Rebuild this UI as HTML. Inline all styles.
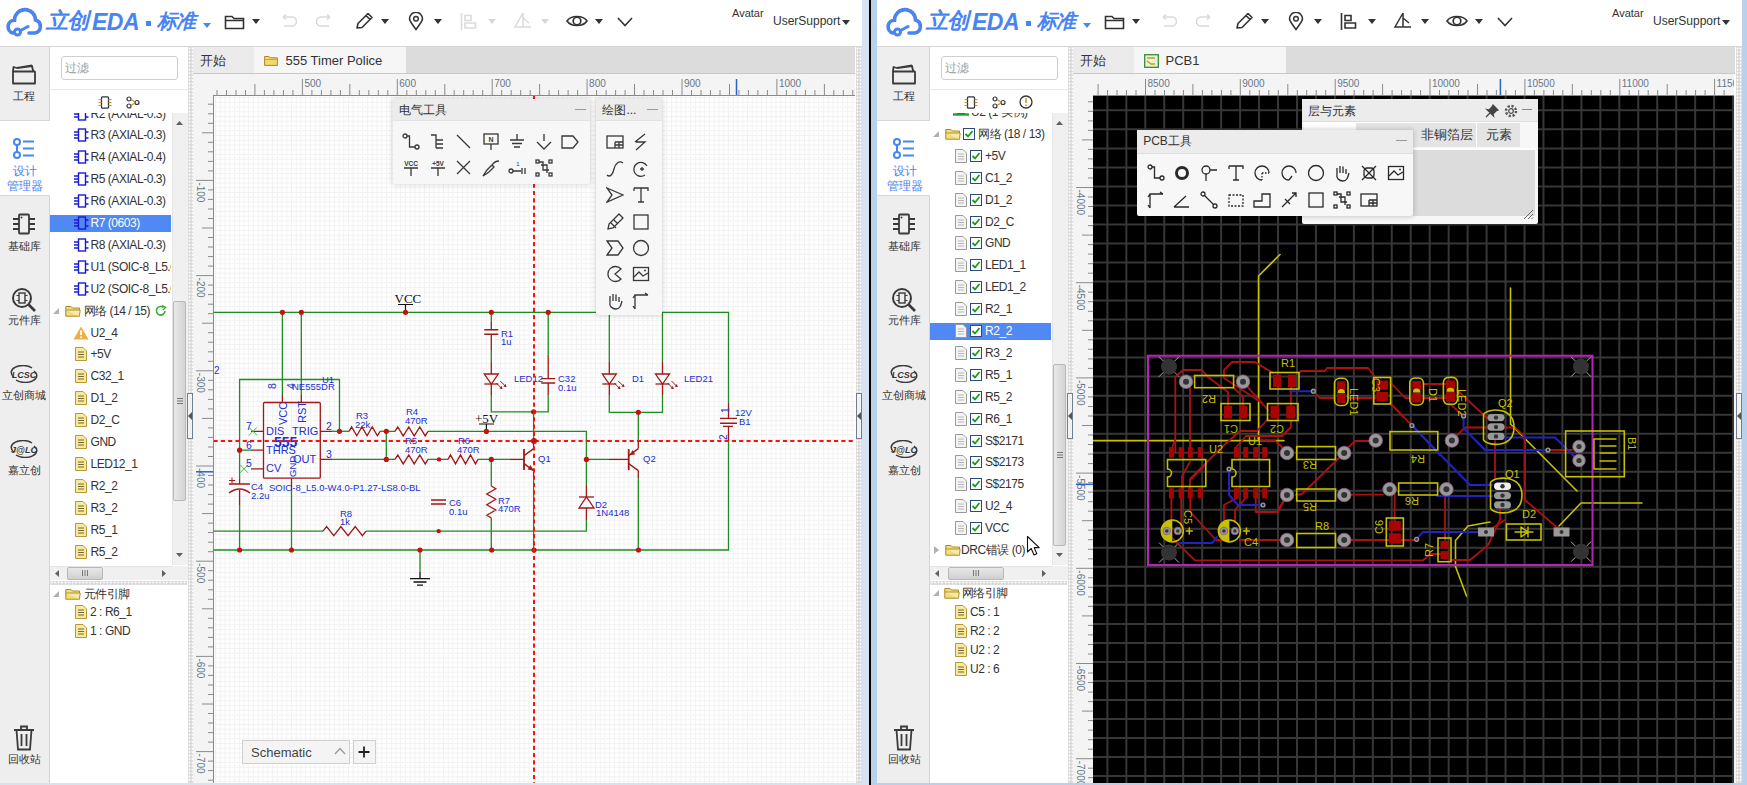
<!DOCTYPE html>
<html><head><meta charset="utf-8"><style>
html,body{margin:0;padding:0;}
body{width:1747px;height:785px;overflow:hidden;position:relative;font-family:"Liberation Sans", sans-serif;background:#fff;}
svg text{font-family:"Liberation Sans", sans-serif;}
</style></head><body>
<div style="position:absolute;left:0px;top:0px;width:1747px;height:785px;background:#b9d1ea"></div><div style="position:absolute;left:0px;top:0px;width:869px;height:785px;background:#d6e4f2"></div><div style="position:absolute;left:869px;top:0px;width:2px;height:785px;background:#000"></div><div style="position:absolute;left:-3px;top:0px;width:865px;height:783px;background:#fff;overflow:hidden"></div><div style="position:absolute;left:-3px;top:0px;width:865px;height:47px;background:#fff;border-bottom:1px solid #d6d6d6;box-sizing:border-box"></div><svg style="position:absolute;left:5px;top:7px;" width="40" height="32" viewBox="0 0 40 32"><path d="M8 26 A6.5 6.5 0 0 1 9.5 13.2 A10.5 10.5 0 0 1 30.5 13 A6.7 6.7 0 0 1 30 26 H24" fill="none" stroke="#4a84f2" stroke-width="3.6" stroke-linecap="round"/><circle cx="12.5" cy="25" r="3" fill="none" stroke="#4a84f2" stroke-width="3"/><path d="M15.5 23.5 L23 19.5" stroke="#4a84f2" stroke-width="3" stroke-linecap="round"/></svg><div style="position:absolute;left:46px;top:10px;font-size:22px;line-height:22px;color:#4a84f2;white-space:nowrap;font-weight:bold;font-style:italic;letter-spacing:-1px">立创</div><div style="position:absolute;left:92px;top:11px;font-size:23px;line-height:23px;color:#4a84f2;white-space:nowrap;font-weight:bold;font-style:italic;letter-spacing:-0.5px">EDA</div><div style="position:absolute;left:146px;top:21px;width:5px;height:5px;background:#4a84f2"></div><div style="position:absolute;left:157px;top:11px;font-size:20px;line-height:20px;color:#4a84f2;white-space:nowrap;font-weight:bold;font-style:italic;letter-spacing:-1.5px">标准</div><svg style="position:absolute;left:203px;top:23px;" width="8" height="5" viewBox="0 0 8 5"><path d="M0 0 L8 0 L4 5 Z" fill="#4a84f2"/></svg><svg style="position:absolute;left:224px;top:13px;" width="22" height="17" viewBox="0 0 22 17"><path d="M1.5 3.5 H8 L10 5.5 H19.5 V15.5 H1.5 Z M1.5 7.5 H19.5" fill="none" stroke="#333" stroke-width="1.6"/></svg><svg style="position:absolute;left:252px;top:19px;" width="8" height="5" viewBox="0 0 8 5"><path d="M0 0 L8 0 L4 5 Z" fill="#333"/></svg><svg style="position:absolute;left:279px;top:14px;" width="18" height="14" viewBox="0 0 18 14"><path d="M4 3 H13 A4.5 4.5 0 0 1 13 12 H5 M4 3 L7 0.5 M4 3 L7 5.5" fill="none" stroke="#dadada" stroke-width="1.6"/></svg><svg style="position:absolute;left:316px;top:14px;" width="18" height="14" viewBox="0 0 18 14"><path d="M14 3 H5 A4.5 4.5 0 0 0 5 12 H13 M14 3 L11 0.5 M14 3 L11 5.5" fill="none" stroke="#dadada" stroke-width="1.6"/></svg><svg style="position:absolute;left:354px;top:12px;" width="20" height="19" viewBox="0 0 20 19"><path d="M3 16 L4 11.5 L14 1.5 L18 5.5 L8 15.5 Z M12 3.5 L16 7.5" fill="none" stroke="#333" stroke-width="1.6" stroke-linejoin="round"/></svg><svg style="position:absolute;left:381px;top:19px;" width="8" height="5" viewBox="0 0 8 5"><path d="M0 0 L8 0 L4 5 Z" fill="#333"/></svg><svg style="position:absolute;left:408px;top:12px;" width="16" height="19" viewBox="0 0 16 19"><path d="M8 17.5 C3 11 1.5 9 1.5 6.8 A6.5 6.5 0 0 1 14.5 6.8 C14.5 9 13 11 8 17.5 Z" fill="none" stroke="#333" stroke-width="1.6"/><circle cx="8" cy="6.8" r="2.3" fill="none" stroke="#333" stroke-width="1.5"/></svg><svg style="position:absolute;left:434px;top:19px;" width="8" height="5" viewBox="0 0 8 5"><path d="M0 0 L8 0 L4 5 Z" fill="#333"/></svg><svg style="position:absolute;left:460px;top:13px;" width="18" height="18" viewBox="0 0 18 18"><path d="M1.5 0 V17 M5 2.5 H11 V7.5 H5 Z M5 10 H15.5 V15 H5 Z" fill="none" stroke="#dadada" stroke-width="1.6"/></svg><svg style="position:absolute;left:488px;top:19px;" width="8" height="5" viewBox="0 0 8 5"><path d="M0 0 L8 0 L4 5 Z" fill="#d8d8d8"/></svg><svg style="position:absolute;left:513px;top:12px;" width="20" height="18" viewBox="0 0 20 18"><path d="M10 1 L10 15 M10 1 L2 15 H18 M10 6 L16 11" fill="none" stroke="#dadada" stroke-width="1.5"/></svg><svg style="position:absolute;left:541px;top:19px;" width="8" height="5" viewBox="0 0 8 5"><path d="M0 0 L8 0 L4 5 Z" fill="#d8d8d8"/></svg><svg style="position:absolute;left:566px;top:14px;" width="22" height="14" viewBox="0 0 22 14"><path d="M1 7 C5 1 17 1 21 7 C17 13 5 13 1 7 Z" fill="none" stroke="#333" stroke-width="1.6"/><circle cx="11" cy="7" r="3.8" fill="none" stroke="#333" stroke-width="1.7"/></svg><svg style="position:absolute;left:595px;top:19px;" width="8" height="5" viewBox="0 0 8 5"><path d="M0 0 L8 0 L4 5 Z" fill="#333"/></svg><svg style="position:absolute;left:617px;top:17px;" width="16" height="10" viewBox="0 0 16 10"><path d="M1 1 L8 8.5 L15 1" fill="none" stroke="#333" stroke-width="1.6"/></svg><div style="position:absolute;left:732px;top:8px;font-size:11px;line-height:11px;color:#333;white-space:nowrap;">Avatar</div><div style="position:absolute;left:773px;top:15px;font-size:12px;line-height:12px;color:#333;white-space:nowrap;">UserSupport</div><svg style="position:absolute;left:842px;top:20px;" width="8" height="5" viewBox="0 0 8 5"><path d="M0 0 L8 0 L4 5 Z" fill="#333"/></svg><div style="position:absolute;left:-3px;top:47px;width:53px;height:736px;background:#eeeeee;border-right:1px solid #d4d4d4;box-sizing:border-box"></div><div style="position:absolute;left:-3px;top:120px;width:53px;height:1px;background:#d8d8d8"></div><div style="position:absolute;left:-3px;top:121px;width:53px;height:74px;background:#ffffff"></div><div style="position:absolute;left:-3px;top:195px;width:53px;height:1px;background:#d8d8d8"></div><svg style="position:absolute;left:11px;top:63px;" width="26" height="23" viewBox="0 0 26 23"><path d="M2 8 V20.5 H24 V9 L22 7.5 L21 3 L6 5 L2.5 4 Z M2 8.5 H24 M6 5 L21 2.5" fill="none" stroke="#3a3a3a" stroke-width="1.8" stroke-linejoin="round"/></svg><div style="position:absolute;left:13px;top:91px;font-size:11px;line-height:11px;color:#333;white-space:nowrap;">工程</div><svg style="position:absolute;left:12px;top:138px;" width="24" height="21" viewBox="0 0 24 21"><circle cx="5" cy="4" r="3" fill="none" stroke="#4a84f2" stroke-width="2"/><circle cx="5" cy="17" r="3" fill="none" stroke="#4a84f2" stroke-width="2"/><path d="M5 7 V14 M11 3.5 H22 M11 10.5 H22 M11 17.5 H22" stroke="#4a84f2" stroke-width="2"/></svg><div style="position:absolute;left:13px;top:166px;font-size:11.5px;line-height:11.5px;color:#4a84f2;white-space:nowrap;">设计</div><div style="position:absolute;left:7px;top:181px;font-size:11.5px;line-height:11.5px;color:#4a84f2;white-space:nowrap;">管理器</div><svg style="position:absolute;left:12px;top:213px;" width="24" height="22" viewBox="0 0 24 22"><rect x="7" y="1.5" width="10" height="19" rx="1" fill="none" stroke="#3a3a3a" stroke-width="1.8"/><path d="M1 6 H7 M1 11 H7 M1 16 H7 M17 6 H23 M17 11 H23 M17 16 H23" stroke="#3a3a3a" stroke-width="1.8"/><circle cx="9.5" cy="4.5" r="1" fill="#3a3a3a"/></svg><div style="position:absolute;left:7.5px;top:241px;font-size:11px;line-height:11px;color:#333;white-space:nowrap;">基础库</div><svg style="position:absolute;left:11px;top:287px;" width="26" height="25" viewBox="0 0 26 25"><circle cx="11" cy="11" r="9" fill="none" stroke="#3a3a3a" stroke-width="2"/><path d="M17.5 17.5 L24 24" stroke="#3a3a3a" stroke-width="2.6"/><rect x="8" y="6" width="6" height="10" fill="none" stroke="#3a3a3a" stroke-width="1.4"/><path d="M5.5 8.5 H8 M5.5 13.5 H8 M14 8.5 H16.5 M14 13.5 H16.5" stroke="#3a3a3a" stroke-width="1.2"/></svg><div style="position:absolute;left:7.5px;top:315px;font-size:11px;line-height:11px;color:#333;white-space:nowrap;">元件库</div><svg style="position:absolute;left:10px;top:365px;" width="28" height="18" viewBox="0 0 28 18"><path d="M4 12 A11 6.5 0 0 1 22 3" fill="none" stroke="#3a3a3a" stroke-width="1.5"/><path d="M24 6 A11 6.5 0 0 1 6 15" fill="none" stroke="#3a3a3a" stroke-width="1.5"/><text x="14" y="12.5" font-size="9" font-weight="bold" font-style="italic" text-anchor="middle" fill="#3a3a3a">LCSC</text></svg><div style="position:absolute;left:2px;top:390px;font-size:11px;line-height:11px;color:#333;white-space:nowrap;">立创商城</div><svg style="position:absolute;left:10px;top:440px;" width="28" height="18" viewBox="0 0 28 18"><path d="M4 12 A11 6.5 0 0 1 22 3" fill="none" stroke="#3a3a3a" stroke-width="1.5"/><path d="M24 6 A11 6.5 0 0 1 6 15" fill="none" stroke="#3a3a3a" stroke-width="1.5"/><text x="14" y="12.5" font-size="9" font-weight="bold" font-style="italic" text-anchor="middle" fill="#3a3a3a">J@LC</text></svg><div style="position:absolute;left:7.5px;top:465px;font-size:11px;line-height:11px;color:#333;white-space:nowrap;">嘉立创</div><svg style="position:absolute;left:12px;top:725px;" width="24" height="26" viewBox="0 0 24 26"><path d="M2 5 H22 M9 5 V1.5 H15 V5 M4.5 5 L6 24.5 H18 L19.5 5 M9.5 9 V21 M14.5 9 V21" fill="none" stroke="#3a3a3a" stroke-width="1.8"/></svg><div style="position:absolute;left:7.5px;top:754px;font-size:11px;line-height:11px;color:#333;white-space:nowrap;">回收站</div><div style="position:absolute;left:50px;top:47px;width:137px;height:736px;background:#fff"></div><div style="position:absolute;left:60.5px;top:56px;width:117px;height:24px;border:1px solid #cfcfcf;border-radius:3px;box-sizing:border-box;background:#fff"></div><div style="position:absolute;left:65px;top:62px;font-size:12px;line-height:12px;color:#9a9a9a;white-space:nowrap;">过滤</div><div style="position:absolute;left:50px;top:89px;width:137px;height:1px;background:#e6e6e6"></div><div style="position:absolute;left:187px;top:47px;width:6px;height:736px;background-color:#dadada;background-image:radial-gradient(circle at 1.5px 1.5px,#ffffff 0.9px,transparent 1.1px);background-size:3px 3.5px;border-left:1px solid #fff;box-sizing:border-box"></div><div style="position:absolute;left:855px;top:47px;width:7px;height:736px;background-color:#dadada;background-image:radial-gradient(circle at 1.5px 1.5px,#ffffff 0.9px,transparent 1.1px);background-size:3px 3.5px;border-left:1px solid #fff;box-sizing:border-box"></div><div style="position:absolute;left:877px;top:0px;width:865px;height:783px;background:#fff;overflow:hidden"></div><div style="position:absolute;left:877px;top:0px;width:865px;height:47px;background:#fff;border-bottom:1px solid #d6d6d6;box-sizing:border-box"></div><svg style="position:absolute;left:885px;top:7px;" width="40" height="32" viewBox="0 0 40 32"><path d="M8 26 A6.5 6.5 0 0 1 9.5 13.2 A10.5 10.5 0 0 1 30.5 13 A6.7 6.7 0 0 1 30 26 H24" fill="none" stroke="#4a84f2" stroke-width="3.6" stroke-linecap="round"/><circle cx="12.5" cy="25" r="3" fill="none" stroke="#4a84f2" stroke-width="3"/><path d="M15.5 23.5 L23 19.5" stroke="#4a84f2" stroke-width="3" stroke-linecap="round"/></svg><div style="position:absolute;left:926px;top:10px;font-size:22px;line-height:22px;color:#4a84f2;white-space:nowrap;font-weight:bold;font-style:italic;letter-spacing:-1px">立创</div><div style="position:absolute;left:972px;top:11px;font-size:23px;line-height:23px;color:#4a84f2;white-space:nowrap;font-weight:bold;font-style:italic;letter-spacing:-0.5px">EDA</div><div style="position:absolute;left:1026px;top:21px;width:5px;height:5px;background:#4a84f2"></div><div style="position:absolute;left:1037px;top:11px;font-size:20px;line-height:20px;color:#4a84f2;white-space:nowrap;font-weight:bold;font-style:italic;letter-spacing:-1.5px">标准</div><svg style="position:absolute;left:1083px;top:23px;" width="8" height="5" viewBox="0 0 8 5"><path d="M0 0 L8 0 L4 5 Z" fill="#4a84f2"/></svg><svg style="position:absolute;left:1104px;top:13px;" width="22" height="17" viewBox="0 0 22 17"><path d="M1.5 3.5 H8 L10 5.5 H19.5 V15.5 H1.5 Z M1.5 7.5 H19.5" fill="none" stroke="#333" stroke-width="1.6"/></svg><svg style="position:absolute;left:1132px;top:19px;" width="8" height="5" viewBox="0 0 8 5"><path d="M0 0 L8 0 L4 5 Z" fill="#333"/></svg><svg style="position:absolute;left:1159px;top:14px;" width="18" height="14" viewBox="0 0 18 14"><path d="M4 3 H13 A4.5 4.5 0 0 1 13 12 H5 M4 3 L7 0.5 M4 3 L7 5.5" fill="none" stroke="#dadada" stroke-width="1.6"/></svg><svg style="position:absolute;left:1196px;top:14px;" width="18" height="14" viewBox="0 0 18 14"><path d="M14 3 H5 A4.5 4.5 0 0 0 5 12 H13 M14 3 L11 0.5 M14 3 L11 5.5" fill="none" stroke="#dadada" stroke-width="1.6"/></svg><svg style="position:absolute;left:1234px;top:12px;" width="20" height="19" viewBox="0 0 20 19"><path d="M3 16 L4 11.5 L14 1.5 L18 5.5 L8 15.5 Z M12 3.5 L16 7.5" fill="none" stroke="#333" stroke-width="1.6" stroke-linejoin="round"/></svg><svg style="position:absolute;left:1261px;top:19px;" width="8" height="5" viewBox="0 0 8 5"><path d="M0 0 L8 0 L4 5 Z" fill="#333"/></svg><svg style="position:absolute;left:1288px;top:12px;" width="16" height="19" viewBox="0 0 16 19"><path d="M8 17.5 C3 11 1.5 9 1.5 6.8 A6.5 6.5 0 0 1 14.5 6.8 C14.5 9 13 11 8 17.5 Z" fill="none" stroke="#333" stroke-width="1.6"/><circle cx="8" cy="6.8" r="2.3" fill="none" stroke="#333" stroke-width="1.5"/></svg><svg style="position:absolute;left:1314px;top:19px;" width="8" height="5" viewBox="0 0 8 5"><path d="M0 0 L8 0 L4 5 Z" fill="#333"/></svg><svg style="position:absolute;left:1340px;top:13px;" width="18" height="18" viewBox="0 0 18 18"><path d="M1.5 0 V17 M5 2.5 H11 V7.5 H5 Z M5 10 H15.5 V15 H5 Z" fill="none" stroke="#333" stroke-width="1.6"/></svg><svg style="position:absolute;left:1368px;top:19px;" width="8" height="5" viewBox="0 0 8 5"><path d="M0 0 L8 0 L4 5 Z" fill="#333"/></svg><svg style="position:absolute;left:1393px;top:12px;" width="20" height="18" viewBox="0 0 20 18"><path d="M10 1 L10 15 M10 1 L2 15 H18 M10 6 L16 11" fill="none" stroke="#333" stroke-width="1.5"/></svg><svg style="position:absolute;left:1421px;top:19px;" width="8" height="5" viewBox="0 0 8 5"><path d="M0 0 L8 0 L4 5 Z" fill="#333"/></svg><svg style="position:absolute;left:1446px;top:14px;" width="22" height="14" viewBox="0 0 22 14"><path d="M1 7 C5 1 17 1 21 7 C17 13 5 13 1 7 Z" fill="none" stroke="#333" stroke-width="1.6"/><circle cx="11" cy="7" r="3.8" fill="none" stroke="#333" stroke-width="1.7"/></svg><svg style="position:absolute;left:1475px;top:19px;" width="8" height="5" viewBox="0 0 8 5"><path d="M0 0 L8 0 L4 5 Z" fill="#333"/></svg><svg style="position:absolute;left:1497px;top:17px;" width="16" height="10" viewBox="0 0 16 10"><path d="M1 1 L8 8.5 L15 1" fill="none" stroke="#333" stroke-width="1.6"/></svg><div style="position:absolute;left:1612px;top:8px;font-size:11px;line-height:11px;color:#333;white-space:nowrap;">Avatar</div><div style="position:absolute;left:1653px;top:15px;font-size:12px;line-height:12px;color:#333;white-space:nowrap;">UserSupport</div><svg style="position:absolute;left:1722px;top:20px;" width="8" height="5" viewBox="0 0 8 5"><path d="M0 0 L8 0 L4 5 Z" fill="#333"/></svg><div style="position:absolute;left:877px;top:47px;width:53px;height:736px;background:#eeeeee;border-right:1px solid #d4d4d4;box-sizing:border-box"></div><div style="position:absolute;left:877px;top:120px;width:53px;height:1px;background:#d8d8d8"></div><div style="position:absolute;left:877px;top:121px;width:53px;height:74px;background:#ffffff"></div><div style="position:absolute;left:877px;top:195px;width:53px;height:1px;background:#d8d8d8"></div><svg style="position:absolute;left:891px;top:63px;" width="26" height="23" viewBox="0 0 26 23"><path d="M2 8 V20.5 H24 V9 L22 7.5 L21 3 L6 5 L2.5 4 Z M2 8.5 H24 M6 5 L21 2.5" fill="none" stroke="#3a3a3a" stroke-width="1.8" stroke-linejoin="round"/></svg><div style="position:absolute;left:893px;top:91px;font-size:11px;line-height:11px;color:#333;white-space:nowrap;">工程</div><svg style="position:absolute;left:892px;top:138px;" width="24" height="21" viewBox="0 0 24 21"><circle cx="5" cy="4" r="3" fill="none" stroke="#4a84f2" stroke-width="2"/><circle cx="5" cy="17" r="3" fill="none" stroke="#4a84f2" stroke-width="2"/><path d="M5 7 V14 M11 3.5 H22 M11 10.5 H22 M11 17.5 H22" stroke="#4a84f2" stroke-width="2"/></svg><div style="position:absolute;left:893px;top:166px;font-size:11.5px;line-height:11.5px;color:#4a84f2;white-space:nowrap;">设计</div><div style="position:absolute;left:887px;top:181px;font-size:11.5px;line-height:11.5px;color:#4a84f2;white-space:nowrap;">管理器</div><svg style="position:absolute;left:892px;top:213px;" width="24" height="22" viewBox="0 0 24 22"><rect x="7" y="1.5" width="10" height="19" rx="1" fill="none" stroke="#3a3a3a" stroke-width="1.8"/><path d="M1 6 H7 M1 11 H7 M1 16 H7 M17 6 H23 M17 11 H23 M17 16 H23" stroke="#3a3a3a" stroke-width="1.8"/><circle cx="9.5" cy="4.5" r="1" fill="#3a3a3a"/></svg><div style="position:absolute;left:887.5px;top:241px;font-size:11px;line-height:11px;color:#333;white-space:nowrap;">基础库</div><svg style="position:absolute;left:891px;top:287px;" width="26" height="25" viewBox="0 0 26 25"><circle cx="11" cy="11" r="9" fill="none" stroke="#3a3a3a" stroke-width="2"/><path d="M17.5 17.5 L24 24" stroke="#3a3a3a" stroke-width="2.6"/><rect x="8" y="6" width="6" height="10" fill="none" stroke="#3a3a3a" stroke-width="1.4"/><path d="M5.5 8.5 H8 M5.5 13.5 H8 M14 8.5 H16.5 M14 13.5 H16.5" stroke="#3a3a3a" stroke-width="1.2"/></svg><div style="position:absolute;left:887.5px;top:315px;font-size:11px;line-height:11px;color:#333;white-space:nowrap;">元件库</div><svg style="position:absolute;left:890px;top:365px;" width="28" height="18" viewBox="0 0 28 18"><path d="M4 12 A11 6.5 0 0 1 22 3" fill="none" stroke="#3a3a3a" stroke-width="1.5"/><path d="M24 6 A11 6.5 0 0 1 6 15" fill="none" stroke="#3a3a3a" stroke-width="1.5"/><text x="14" y="12.5" font-size="9" font-weight="bold" font-style="italic" text-anchor="middle" fill="#3a3a3a">LCSC</text></svg><div style="position:absolute;left:882px;top:390px;font-size:11px;line-height:11px;color:#333;white-space:nowrap;">立创商城</div><svg style="position:absolute;left:890px;top:440px;" width="28" height="18" viewBox="0 0 28 18"><path d="M4 12 A11 6.5 0 0 1 22 3" fill="none" stroke="#3a3a3a" stroke-width="1.5"/><path d="M24 6 A11 6.5 0 0 1 6 15" fill="none" stroke="#3a3a3a" stroke-width="1.5"/><text x="14" y="12.5" font-size="9" font-weight="bold" font-style="italic" text-anchor="middle" fill="#3a3a3a">J@LC</text></svg><div style="position:absolute;left:887.5px;top:465px;font-size:11px;line-height:11px;color:#333;white-space:nowrap;">嘉立创</div><svg style="position:absolute;left:892px;top:725px;" width="24" height="26" viewBox="0 0 24 26"><path d="M2 5 H22 M9 5 V1.5 H15 V5 M4.5 5 L6 24.5 H18 L19.5 5 M9.5 9 V21 M14.5 9 V21" fill="none" stroke="#3a3a3a" stroke-width="1.8"/></svg><div style="position:absolute;left:887.5px;top:754px;font-size:11px;line-height:11px;color:#333;white-space:nowrap;">回收站</div><div style="position:absolute;left:930px;top:47px;width:137px;height:736px;background:#fff"></div><div style="position:absolute;left:940.5px;top:56px;width:117px;height:24px;border:1px solid #cfcfcf;border-radius:3px;box-sizing:border-box;background:#fff"></div><div style="position:absolute;left:945px;top:62px;font-size:12px;line-height:12px;color:#9a9a9a;white-space:nowrap;">过滤</div><div style="position:absolute;left:930px;top:89px;width:137px;height:1px;background:#e6e6e6"></div><div style="position:absolute;left:1067px;top:47px;width:6px;height:736px;background-color:#dadada;background-image:radial-gradient(circle at 1.5px 1.5px,#ffffff 0.9px,transparent 1.1px);background-size:3px 3.5px;border-left:1px solid #fff;box-sizing:border-box"></div><div style="position:absolute;left:1735px;top:47px;width:7px;height:736px;background-color:#dadada;background-image:radial-gradient(circle at 1.5px 1.5px,#ffffff 0.9px,transparent 1.1px);background-size:3px 3.5px;border-left:1px solid #fff;box-sizing:border-box"></div><div style="position:absolute;left:50px;top:112.8px;width:121px;height:452.2px;overflow:hidden"><svg style="position:absolute;left:23px;top:-6.200000000000003px;" width="16" height="14" viewBox="0 0 16 14"><rect x="5.5" y="1" width="7" height="12" fill="none" stroke="#1a1ad0" stroke-width="1.4"/><path d="M1 4 H5.5 M1 7 H5.5 M1 10 H5.5 M12.5 4 H15.5 M12.5 10 H15.5" stroke="#1a1ad0" stroke-width="1.3"/></svg><div style="position:absolute;left:40.5px;top:-6.200000000000003px;font-size:12px;line-height:12px;color:#333;white-space:nowrap;line-height:14px;letter-spacing:-0.45px">R2 (AXIAL-0.3)</div><svg style="position:absolute;left:23px;top:15.700000000000003px;" width="16" height="14" viewBox="0 0 16 14"><rect x="5.5" y="1" width="7" height="12" fill="none" stroke="#1a1ad0" stroke-width="1.4"/><path d="M1 4 H5.5 M1 7 H5.5 M1 10 H5.5 M12.5 4 H15.5 M12.5 10 H15.5" stroke="#1a1ad0" stroke-width="1.3"/></svg><div style="position:absolute;left:40.5px;top:15.700000000000003px;font-size:12px;line-height:12px;color:#333;white-space:nowrap;line-height:14px;letter-spacing:-0.45px">R3 (AXIAL-0.3)</div><svg style="position:absolute;left:23px;top:37.59999999999998px;" width="16" height="14" viewBox="0 0 16 14"><rect x="5.5" y="1" width="7" height="12" fill="none" stroke="#1a1ad0" stroke-width="1.4"/><path d="M1 4 H5.5 M1 7 H5.5 M1 10 H5.5 M12.5 4 H15.5 M12.5 10 H15.5" stroke="#1a1ad0" stroke-width="1.3"/></svg><div style="position:absolute;left:40.5px;top:37.59999999999998px;font-size:12px;line-height:12px;color:#333;white-space:nowrap;line-height:14px;letter-spacing:-0.45px">R4 (AXIAL-0.4)</div><svg style="position:absolute;left:23px;top:59.499999999999986px;" width="16" height="14" viewBox="0 0 16 14"><rect x="5.5" y="1" width="7" height="12" fill="none" stroke="#1a1ad0" stroke-width="1.4"/><path d="M1 4 H5.5 M1 7 H5.5 M1 10 H5.5 M12.5 4 H15.5 M12.5 10 H15.5" stroke="#1a1ad0" stroke-width="1.3"/></svg><div style="position:absolute;left:40.5px;top:59.499999999999986px;font-size:12px;line-height:12px;color:#333;white-space:nowrap;line-height:14px;letter-spacing:-0.45px">R5 (AXIAL-0.3)</div><svg style="position:absolute;left:23px;top:81.39999999999999px;" width="16" height="14" viewBox="0 0 16 14"><rect x="5.5" y="1" width="7" height="12" fill="none" stroke="#1a1ad0" stroke-width="1.4"/><path d="M1 4 H5.5 M1 7 H5.5 M1 10 H5.5 M12.5 4 H15.5 M12.5 10 H15.5" stroke="#1a1ad0" stroke-width="1.3"/></svg><div style="position:absolute;left:40.5px;top:81.39999999999999px;font-size:12px;line-height:12px;color:#333;white-space:nowrap;line-height:14px;letter-spacing:-0.45px">R6 (AXIAL-0.3)</div><div style="position:absolute;left:0px;top:102.3px;width:121px;height:16.5px;background:#5088f4"></div><svg style="position:absolute;left:23px;top:103.3px;" width="16" height="14" viewBox="0 0 16 14"><rect x="5.5" y="1" width="7" height="12" fill="none" stroke="#1a1ad0" stroke-width="1.4"/><path d="M1 4 H5.5 M1 7 H5.5 M1 10 H5.5 M12.5 4 H15.5 M12.5 10 H15.5" stroke="#1a1ad0" stroke-width="1.3"/></svg><div style="position:absolute;left:40.5px;top:103.3px;font-size:12px;line-height:12px;color:#fff;white-space:nowrap;line-height:14px;letter-spacing:-0.45px">R7 (0603)</div><svg style="position:absolute;left:23px;top:125.19999999999999px;" width="16" height="14" viewBox="0 0 16 14"><rect x="5.5" y="1" width="7" height="12" fill="none" stroke="#1a1ad0" stroke-width="1.4"/><path d="M1 4 H5.5 M1 7 H5.5 M1 10 H5.5 M12.5 4 H15.5 M12.5 10 H15.5" stroke="#1a1ad0" stroke-width="1.3"/></svg><div style="position:absolute;left:40.5px;top:125.19999999999999px;font-size:12px;line-height:12px;color:#333;white-space:nowrap;line-height:14px;letter-spacing:-0.45px">R8 (AXIAL-0.3)</div><svg style="position:absolute;left:23px;top:147.09999999999997px;" width="16" height="14" viewBox="0 0 16 14"><rect x="5.5" y="1" width="7" height="12" fill="none" stroke="#1a1ad0" stroke-width="1.4"/><path d="M1 4 H5.5 M1 7 H5.5 M1 10 H5.5 M12.5 4 H15.5 M12.5 10 H15.5" stroke="#1a1ad0" stroke-width="1.3"/></svg><div style="position:absolute;left:40.5px;top:147.09999999999997px;font-size:12px;line-height:12px;color:#333;white-space:nowrap;line-height:14px;letter-spacing:-0.45px">U1 (SOIC-8_L5.0</div><svg style="position:absolute;left:23px;top:168.99999999999994px;" width="16" height="14" viewBox="0 0 16 14"><rect x="5.5" y="1" width="7" height="12" fill="none" stroke="#1a1ad0" stroke-width="1.4"/><path d="M1 4 H5.5 M1 7 H5.5 M1 10 H5.5 M12.5 4 H15.5 M12.5 10 H15.5" stroke="#1a1ad0" stroke-width="1.3"/></svg><div style="position:absolute;left:40.5px;top:168.99999999999994px;font-size:12px;line-height:12px;color:#333;white-space:nowrap;line-height:14px;letter-spacing:-0.45px">U2 (SOIC-8_L5.0</div><svg style="position:absolute;left:3px;top:194.89999999999998px;" width="6" height="6" viewBox="0 0 6 6"><path d="M6 0 V6 H0 Z" fill="#b0b0b0"/></svg><svg style="position:absolute;left:15px;top:190.89999999999998px;" width="16" height="13" viewBox="0 0 16 13"><path d="M0.8 2.5 H6 L7.5 4 H14.5 V12.2 H0.8 Z" fill="#f3dc7a" stroke="#a88a2a" stroke-width="1"/><path d="M0.8 6 H15.2 L14.5 12.2" fill="#f8e9a8" stroke="#a88a2a" stroke-width="0.9"/></svg><svg style="position:absolute;left:105px;top:191.89999999999998px;" width="12" height="12" viewBox="0 0 12 12"><path d="M10 6 A4.3 4.3 0 1 1 8.5 2.5" fill="none" stroke="#30b030" stroke-width="1.6"/><path d="M7 0.5 L10.5 2.5 L8 5" fill="none" stroke="#30b030" stroke-width="1.4"/></svg><div style="position:absolute;left:33.5px;top:190.89999999999998px;font-size:12px;line-height:12px;color:#333;white-space:nowrap;line-height:14px;letter-spacing:-0.45px">网络 (14 / 15)</div><svg style="position:absolute;left:23px;top:212.8px;" width="16" height="14" viewBox="0 0 16 14"><path d="M8 0.5 L15.5 13.5 H0.5 Z" fill="#f0b040"/><path d="M8 4.5 V9" stroke="#fff" stroke-width="1.8"/><circle cx="8" cy="11.2" r="1" fill="#fff"/></svg><div style="position:absolute;left:40.5px;top:212.8px;font-size:12px;line-height:12px;color:#333;white-space:nowrap;line-height:14px;letter-spacing:-0.45px">U2_4</div><svg style="position:absolute;left:25px;top:234.7px;" width="12" height="14" viewBox="0 0 12 14"><path d="M0.5 0.5 H8 L11.5 4 V13.5 H0.5 Z" fill="#f7eaa0" stroke="#b59a3a" stroke-width="1"/><path d="M3 5 H9 M3 7.5 H9 M3 10 H9" stroke="#6a5a20" stroke-width="0.9"/></svg><div style="position:absolute;left:40.5px;top:234.7px;font-size:12px;line-height:12px;color:#333;white-space:nowrap;line-height:14px;letter-spacing:-0.45px">+5V</div><svg style="position:absolute;left:25px;top:256.59999999999997px;" width="12" height="14" viewBox="0 0 12 14"><path d="M0.5 0.5 H8 L11.5 4 V13.5 H0.5 Z" fill="#f7eaa0" stroke="#b59a3a" stroke-width="1"/><path d="M3 5 H9 M3 7.5 H9 M3 10 H9" stroke="#6a5a20" stroke-width="0.9"/></svg><div style="position:absolute;left:40.5px;top:256.59999999999997px;font-size:12px;line-height:12px;color:#333;white-space:nowrap;line-height:14px;letter-spacing:-0.45px">C32_1</div><svg style="position:absolute;left:25px;top:278.49999999999994px;" width="12" height="14" viewBox="0 0 12 14"><path d="M0.5 0.5 H8 L11.5 4 V13.5 H0.5 Z" fill="#f7eaa0" stroke="#b59a3a" stroke-width="1"/><path d="M3 5 H9 M3 7.5 H9 M3 10 H9" stroke="#6a5a20" stroke-width="0.9"/></svg><div style="position:absolute;left:40.5px;top:278.49999999999994px;font-size:12px;line-height:12px;color:#333;white-space:nowrap;line-height:14px;letter-spacing:-0.45px">D1_2</div><svg style="position:absolute;left:25px;top:300.3999999999999px;" width="12" height="14" viewBox="0 0 12 14"><path d="M0.5 0.5 H8 L11.5 4 V13.5 H0.5 Z" fill="#f7eaa0" stroke="#b59a3a" stroke-width="1"/><path d="M3 5 H9 M3 7.5 H9 M3 10 H9" stroke="#6a5a20" stroke-width="0.9"/></svg><div style="position:absolute;left:40.5px;top:300.3999999999999px;font-size:12px;line-height:12px;color:#333;white-space:nowrap;line-height:14px;letter-spacing:-0.45px">D2_C</div><svg style="position:absolute;left:25px;top:322.3px;" width="12" height="14" viewBox="0 0 12 14"><path d="M0.5 0.5 H8 L11.5 4 V13.5 H0.5 Z" fill="#f7eaa0" stroke="#b59a3a" stroke-width="1"/><path d="M3 5 H9 M3 7.5 H9 M3 10 H9" stroke="#6a5a20" stroke-width="0.9"/></svg><div style="position:absolute;left:40.5px;top:322.3px;font-size:12px;line-height:12px;color:#333;white-space:nowrap;line-height:14px;letter-spacing:-0.45px">GND</div><svg style="position:absolute;left:25px;top:344.2px;" width="12" height="14" viewBox="0 0 12 14"><path d="M0.5 0.5 H8 L11.5 4 V13.5 H0.5 Z" fill="#f7eaa0" stroke="#b59a3a" stroke-width="1"/><path d="M3 5 H9 M3 7.5 H9 M3 10 H9" stroke="#6a5a20" stroke-width="0.9"/></svg><div style="position:absolute;left:40.5px;top:344.2px;font-size:12px;line-height:12px;color:#333;white-space:nowrap;line-height:14px;letter-spacing:-0.45px">LED12_1</div><svg style="position:absolute;left:25px;top:366.09999999999997px;" width="12" height="14" viewBox="0 0 12 14"><path d="M0.5 0.5 H8 L11.5 4 V13.5 H0.5 Z" fill="#f7eaa0" stroke="#b59a3a" stroke-width="1"/><path d="M3 5 H9 M3 7.5 H9 M3 10 H9" stroke="#6a5a20" stroke-width="0.9"/></svg><div style="position:absolute;left:40.5px;top:366.09999999999997px;font-size:12px;line-height:12px;color:#333;white-space:nowrap;line-height:14px;letter-spacing:-0.45px">R2_2</div><svg style="position:absolute;left:25px;top:387.99999999999994px;" width="12" height="14" viewBox="0 0 12 14"><path d="M0.5 0.5 H8 L11.5 4 V13.5 H0.5 Z" fill="#f7eaa0" stroke="#b59a3a" stroke-width="1"/><path d="M3 5 H9 M3 7.5 H9 M3 10 H9" stroke="#6a5a20" stroke-width="0.9"/></svg><div style="position:absolute;left:40.5px;top:387.99999999999994px;font-size:12px;line-height:12px;color:#333;white-space:nowrap;line-height:14px;letter-spacing:-0.45px">R3_2</div><svg style="position:absolute;left:25px;top:409.8999999999999px;" width="12" height="14" viewBox="0 0 12 14"><path d="M0.5 0.5 H8 L11.5 4 V13.5 H0.5 Z" fill="#f7eaa0" stroke="#b59a3a" stroke-width="1"/><path d="M3 5 H9 M3 7.5 H9 M3 10 H9" stroke="#6a5a20" stroke-width="0.9"/></svg><div style="position:absolute;left:40.5px;top:409.8999999999999px;font-size:12px;line-height:12px;color:#333;white-space:nowrap;line-height:14px;letter-spacing:-0.45px">R5_1</div><svg style="position:absolute;left:25px;top:431.8px;" width="12" height="14" viewBox="0 0 12 14"><path d="M0.5 0.5 H8 L11.5 4 V13.5 H0.5 Z" fill="#f7eaa0" stroke="#b59a3a" stroke-width="1"/><path d="M3 5 H9 M3 7.5 H9 M3 10 H9" stroke="#6a5a20" stroke-width="0.9"/></svg><div style="position:absolute;left:40.5px;top:431.8px;font-size:12px;line-height:12px;color:#333;white-space:nowrap;line-height:14px;letter-spacing:-0.45px">R5_2</div></div><div style="position:absolute;left:171.5px;top:112.8px;width:16px;height:452.2px;background:#f0f0f0;border-left:1px solid #e4e4e4;box-sizing:border-box"></div><svg style="position:absolute;left:175.5px;top:120.8px;" width="7" height="4" viewBox="0 0 7 4"><path d="M0 4 L3.5 0 L7 4 Z" fill="#606060"/></svg><svg style="position:absolute;left:175.5px;top:553.0px;" width="7" height="4" viewBox="0 0 7 4"><path d="M0 0 L3.5 4 L7 0 Z" fill="#606060"/></svg><div style="position:absolute;left:173.0px;top:300.5px;width:13px;height:200.5px;background:linear-gradient(to right,#e8e8e8,#d4d4d4);border:1px solid #b8b8b8;border-radius:2px;box-sizing:border-box"></div><svg style="position:absolute;left:176.5px;top:397.75px;" width="6" height="6" viewBox="0 0 6 6"><path d="M0 0.5 H6 M0 3 H6 M0 5.5 H6" stroke="#777" stroke-width="1"/></svg><div style="position:absolute;left:50px;top:566px;width:121.5px;height:14px;background:#f0f0f0;border-top:1px solid #e4e4e4;box-sizing:border-box"></div><svg style="position:absolute;left:55px;top:570px;" width="4" height="7" viewBox="0 0 4 7"><path d="M4 0 L0 3.5 L4 7 Z" fill="#606060"/></svg><svg style="position:absolute;left:161.5px;top:570px;" width="4" height="7" viewBox="0 0 4 7"><path d="M0 0 L4 3.5 L0 7 Z" fill="#606060"/></svg><div style="position:absolute;left:67px;top:567px;width:35.5px;height:13px;background:linear-gradient(to bottom,#e8e8e8,#cfcfcf);border:1px solid #b8b8b8;border-radius:2px;box-sizing:border-box"></div><svg style="position:absolute;left:81.75px;top:570px;" width="6" height="6" viewBox="0 0 6 6"><path d="M0.5 0 V6 M3 0 V6 M5.5 0 V6" stroke="#777" stroke-width="1"/></svg><div style="position:absolute;left:171.5px;top:566px;width:16px;height:14px;background:#f0f0f0"></div><div style="position:absolute;left:50px;top:581px;width:137px;height:4px;background-color:#dadada;background-image:radial-gradient(circle at 1.5px 1.5px,#ffffff 0.9px,transparent 1.1px);background-size:3.5px 3px"></div><svg style="position:absolute;left:53px;top:590.5px;" width="6" height="6" viewBox="0 0 6 6"><path d="M6 0 V6 H0 Z" fill="#b0b0b0"/></svg><svg style="position:absolute;left:65px;top:586.5px;" width="16" height="13" viewBox="0 0 16 13"><path d="M0.8 2.5 H6 L7.5 4 H14.5 V12.2 H0.8 Z" fill="#f3dc7a" stroke="#a88a2a" stroke-width="1"/><path d="M0.8 6 H15.2 L14.5 12.2" fill="#f8e9a8" stroke="#a88a2a" stroke-width="0.9"/></svg><div style="position:absolute;left:83.5px;top:586.5px;font-size:12px;line-height:12px;color:#333;white-space:nowrap;line-height:14px;letter-spacing:-0.45px">元件引脚</div><svg style="position:absolute;left:75px;top:604.7px;" width="12" height="14" viewBox="0 0 12 14"><path d="M0.5 0.5 H8 L11.5 4 V13.5 H0.5 Z" fill="#f7eaa0" stroke="#b59a3a" stroke-width="1"/><path d="M3 5 H9 M3 7.5 H9 M3 10 H9" stroke="#6a5a20" stroke-width="0.9"/></svg><div style="position:absolute;left:90px;top:604.7px;font-size:12px;line-height:12px;color:#333;white-space:nowrap;line-height:14px;letter-spacing:-0.45px">2 : R6_1</div><svg style="position:absolute;left:75px;top:623.5px;" width="12" height="14" viewBox="0 0 12 14"><path d="M0.5 0.5 H8 L11.5 4 V13.5 H0.5 Z" fill="#f7eaa0" stroke="#b59a3a" stroke-width="1"/><path d="M3 5 H9 M3 7.5 H9 M3 10 H9" stroke="#6a5a20" stroke-width="0.9"/></svg><div style="position:absolute;left:90px;top:623.5px;font-size:12px;line-height:12px;color:#333;white-space:nowrap;line-height:14px;letter-spacing:-0.45px">1 : GND</div><svg style="position:absolute;left:98px;top:96px;" width="14" height="13" viewBox="0 0 14 13"><rect x="3.5" y="0.8" width="7" height="11.4" rx="1" fill="none" stroke="#333" stroke-width="1.3"/><path d="M0.5 3.5 H3.5 M0.5 6.5 H3.5 M0.5 9.5 H3.5 M10.5 3.5 H13.5 M10.5 6.5 H13.5 M10.5 9.5 H13.5" stroke="#c8902a" stroke-width="1.2"/></svg><svg style="position:absolute;left:126px;top:96px;" width="14" height="13" viewBox="0 0 14 13"><circle cx="3" cy="3" r="2" fill="none" stroke="#333" stroke-width="1.2"/><circle cx="11" cy="6.5" r="2" fill="none" stroke="#333" stroke-width="1.2"/><circle cx="3" cy="10" r="2" fill="none" stroke="#333" stroke-width="1.2"/><path d="M5 3.5 L9 6 M5 9.5 L9 7" stroke="#c8902a" stroke-width="1.2"/></svg><div style="position:absolute;left:930px;top:112.8px;width:121px;height:452.2px;overflow:hidden"><svg style="position:absolute;left:23px;top:-6.700000000000003px;" width="16" height="10" viewBox="0 0 16 10"><rect x="4" y="1" width="8" height="7" fill="#c01010"/><path d="M0 8.5 H16" stroke="#20a020" stroke-width="2.4"/><path d="M2 3 H14" stroke="#20a020" stroke-width="1.2"/></svg><div style="position:absolute;left:41px;top:-7.700000000000003px;font-size:12px;line-height:12px;color:#333;white-space:nowrap;line-height:14px;letter-spacing:-0.45px">U2 (1 实例)</div><svg style="position:absolute;left:3px;top:18.200000000000003px;" width="6" height="6" viewBox="0 0 6 6"><path d="M6 0 V6 H0 Z" fill="#b0b0b0"/></svg><svg style="position:absolute;left:15px;top:14.200000000000003px;" width="16" height="13" viewBox="0 0 16 13"><path d="M0.8 2.5 H6 L7.5 4 H14.5 V12.2 H0.8 Z" fill="#f3dc7a" stroke="#a88a2a" stroke-width="1"/><path d="M0.8 6 H15.2 L14.5 12.2" fill="#f8e9a8" stroke="#a88a2a" stroke-width="0.9"/></svg><svg style="position:absolute;left:33px;top:15.200000000000003px;" width="12" height="12" viewBox="0 0 12 12"><rect x="0.5" y="0.5" width="11" height="11" fill="#fff" stroke="#2a4a7a" stroke-width="1"/><path d="M2.5 6 L5 8.5 L9.5 3" fill="none" stroke="#1a9a1a" stroke-width="1.8"/></svg><div style="position:absolute;left:48px;top:14.200000000000003px;font-size:12px;line-height:12px;color:#333;white-space:nowrap;line-height:14px;letter-spacing:-0.45px">网络 (18 / 13)</div><svg style="position:absolute;left:25px;top:36.09999999999998px;" width="12" height="14" viewBox="0 0 12 14"><path d="M0.5 0.5 H8 L11.5 4 V13.5 H0.5 Z" fill="#f4f4f4" stroke="#9a9a9a" stroke-width="1"/><path d="M3 5 H9 M3 7.5 H9 M3 10 H9" stroke="#b0b0b0" stroke-width="0.9"/></svg><svg style="position:absolute;left:40px;top:37.09999999999998px;" width="12" height="12" viewBox="0 0 12 12"><rect x="0.5" y="0.5" width="11" height="11" fill="#fff" stroke="#2a4a7a" stroke-width="1"/><path d="M2.5 6 L5 8.5 L9.5 3" fill="none" stroke="#1a9a1a" stroke-width="1.8"/></svg><div style="position:absolute;left:55px;top:36.09999999999998px;font-size:12px;line-height:12px;color:#333;white-space:nowrap;line-height:14px;letter-spacing:-0.45px">+5V</div><svg style="position:absolute;left:25px;top:57.999999999999986px;" width="12" height="14" viewBox="0 0 12 14"><path d="M0.5 0.5 H8 L11.5 4 V13.5 H0.5 Z" fill="#f4f4f4" stroke="#9a9a9a" stroke-width="1"/><path d="M3 5 H9 M3 7.5 H9 M3 10 H9" stroke="#b0b0b0" stroke-width="0.9"/></svg><svg style="position:absolute;left:40px;top:58.999999999999986px;" width="12" height="12" viewBox="0 0 12 12"><rect x="0.5" y="0.5" width="11" height="11" fill="#fff" stroke="#2a4a7a" stroke-width="1"/><path d="M2.5 6 L5 8.5 L9.5 3" fill="none" stroke="#1a9a1a" stroke-width="1.8"/></svg><div style="position:absolute;left:55px;top:57.999999999999986px;font-size:12px;line-height:12px;color:#333;white-space:nowrap;line-height:14px;letter-spacing:-0.45px">C1_2</div><svg style="position:absolute;left:25px;top:79.89999999999999px;" width="12" height="14" viewBox="0 0 12 14"><path d="M0.5 0.5 H8 L11.5 4 V13.5 H0.5 Z" fill="#f4f4f4" stroke="#9a9a9a" stroke-width="1"/><path d="M3 5 H9 M3 7.5 H9 M3 10 H9" stroke="#b0b0b0" stroke-width="0.9"/></svg><svg style="position:absolute;left:40px;top:80.89999999999999px;" width="12" height="12" viewBox="0 0 12 12"><rect x="0.5" y="0.5" width="11" height="11" fill="#fff" stroke="#2a4a7a" stroke-width="1"/><path d="M2.5 6 L5 8.5 L9.5 3" fill="none" stroke="#1a9a1a" stroke-width="1.8"/></svg><div style="position:absolute;left:55px;top:79.89999999999999px;font-size:12px;line-height:12px;color:#333;white-space:nowrap;line-height:14px;letter-spacing:-0.45px">D1_2</div><svg style="position:absolute;left:25px;top:101.8px;" width="12" height="14" viewBox="0 0 12 14"><path d="M0.5 0.5 H8 L11.5 4 V13.5 H0.5 Z" fill="#f4f4f4" stroke="#9a9a9a" stroke-width="1"/><path d="M3 5 H9 M3 7.5 H9 M3 10 H9" stroke="#b0b0b0" stroke-width="0.9"/></svg><svg style="position:absolute;left:40px;top:102.8px;" width="12" height="12" viewBox="0 0 12 12"><rect x="0.5" y="0.5" width="11" height="11" fill="#fff" stroke="#2a4a7a" stroke-width="1"/><path d="M2.5 6 L5 8.5 L9.5 3" fill="none" stroke="#1a9a1a" stroke-width="1.8"/></svg><div style="position:absolute;left:55px;top:101.8px;font-size:12px;line-height:12px;color:#333;white-space:nowrap;line-height:14px;letter-spacing:-0.45px">D2_C</div><svg style="position:absolute;left:25px;top:123.69999999999999px;" width="12" height="14" viewBox="0 0 12 14"><path d="M0.5 0.5 H8 L11.5 4 V13.5 H0.5 Z" fill="#f4f4f4" stroke="#9a9a9a" stroke-width="1"/><path d="M3 5 H9 M3 7.5 H9 M3 10 H9" stroke="#b0b0b0" stroke-width="0.9"/></svg><svg style="position:absolute;left:40px;top:124.69999999999999px;" width="12" height="12" viewBox="0 0 12 12"><rect x="0.5" y="0.5" width="11" height="11" fill="#fff" stroke="#2a4a7a" stroke-width="1"/><path d="M2.5 6 L5 8.5 L9.5 3" fill="none" stroke="#1a9a1a" stroke-width="1.8"/></svg><div style="position:absolute;left:55px;top:123.69999999999999px;font-size:12px;line-height:12px;color:#333;white-space:nowrap;line-height:14px;letter-spacing:-0.45px">GND</div><svg style="position:absolute;left:25px;top:145.59999999999997px;" width="12" height="14" viewBox="0 0 12 14"><path d="M0.5 0.5 H8 L11.5 4 V13.5 H0.5 Z" fill="#f4f4f4" stroke="#9a9a9a" stroke-width="1"/><path d="M3 5 H9 M3 7.5 H9 M3 10 H9" stroke="#b0b0b0" stroke-width="0.9"/></svg><svg style="position:absolute;left:40px;top:146.59999999999997px;" width="12" height="12" viewBox="0 0 12 12"><rect x="0.5" y="0.5" width="11" height="11" fill="#fff" stroke="#2a4a7a" stroke-width="1"/><path d="M2.5 6 L5 8.5 L9.5 3" fill="none" stroke="#1a9a1a" stroke-width="1.8"/></svg><div style="position:absolute;left:55px;top:145.59999999999997px;font-size:12px;line-height:12px;color:#333;white-space:nowrap;line-height:14px;letter-spacing:-0.45px">LED1_1</div><svg style="position:absolute;left:25px;top:167.49999999999994px;" width="12" height="14" viewBox="0 0 12 14"><path d="M0.5 0.5 H8 L11.5 4 V13.5 H0.5 Z" fill="#f4f4f4" stroke="#9a9a9a" stroke-width="1"/><path d="M3 5 H9 M3 7.5 H9 M3 10 H9" stroke="#b0b0b0" stroke-width="0.9"/></svg><svg style="position:absolute;left:40px;top:168.49999999999994px;" width="12" height="12" viewBox="0 0 12 12"><rect x="0.5" y="0.5" width="11" height="11" fill="#fff" stroke="#2a4a7a" stroke-width="1"/><path d="M2.5 6 L5 8.5 L9.5 3" fill="none" stroke="#1a9a1a" stroke-width="1.8"/></svg><div style="position:absolute;left:55px;top:167.49999999999994px;font-size:12px;line-height:12px;color:#333;white-space:nowrap;line-height:14px;letter-spacing:-0.45px">LED1_2</div><svg style="position:absolute;left:25px;top:189.39999999999998px;" width="12" height="14" viewBox="0 0 12 14"><path d="M0.5 0.5 H8 L11.5 4 V13.5 H0.5 Z" fill="#f4f4f4" stroke="#9a9a9a" stroke-width="1"/><path d="M3 5 H9 M3 7.5 H9 M3 10 H9" stroke="#b0b0b0" stroke-width="0.9"/></svg><svg style="position:absolute;left:40px;top:190.39999999999998px;" width="12" height="12" viewBox="0 0 12 12"><rect x="0.5" y="0.5" width="11" height="11" fill="#fff" stroke="#2a4a7a" stroke-width="1"/><path d="M2.5 6 L5 8.5 L9.5 3" fill="none" stroke="#1a9a1a" stroke-width="1.8"/></svg><div style="position:absolute;left:55px;top:189.39999999999998px;font-size:12px;line-height:12px;color:#333;white-space:nowrap;line-height:14px;letter-spacing:-0.45px">R2_1</div><div style="position:absolute;left:0px;top:210.3px;width:121px;height:16.5px;background:#5088f4"></div><svg style="position:absolute;left:25px;top:211.3px;" width="12" height="14" viewBox="0 0 12 14"><path d="M0.5 0.5 H8 L11.5 4 V13.5 H0.5 Z" fill="#f4f4f4" stroke="#9a9a9a" stroke-width="1"/><path d="M3 5 H9 M3 7.5 H9 M3 10 H9" stroke="#b0b0b0" stroke-width="0.9"/></svg><svg style="position:absolute;left:40px;top:212.3px;" width="12" height="12" viewBox="0 0 12 12"><rect x="0.5" y="0.5" width="11" height="11" fill="#fff" stroke="#2a4a7a" stroke-width="1"/><path d="M2.5 6 L5 8.5 L9.5 3" fill="none" stroke="#1a9a1a" stroke-width="1.8"/></svg><div style="position:absolute;left:55px;top:211.3px;font-size:12px;line-height:12px;color:#fff;white-space:nowrap;line-height:14px;letter-spacing:-0.45px">R2_2</div><svg style="position:absolute;left:25px;top:233.2px;" width="12" height="14" viewBox="0 0 12 14"><path d="M0.5 0.5 H8 L11.5 4 V13.5 H0.5 Z" fill="#f4f4f4" stroke="#9a9a9a" stroke-width="1"/><path d="M3 5 H9 M3 7.5 H9 M3 10 H9" stroke="#b0b0b0" stroke-width="0.9"/></svg><svg style="position:absolute;left:40px;top:234.2px;" width="12" height="12" viewBox="0 0 12 12"><rect x="0.5" y="0.5" width="11" height="11" fill="#fff" stroke="#2a4a7a" stroke-width="1"/><path d="M2.5 6 L5 8.5 L9.5 3" fill="none" stroke="#1a9a1a" stroke-width="1.8"/></svg><div style="position:absolute;left:55px;top:233.2px;font-size:12px;line-height:12px;color:#333;white-space:nowrap;line-height:14px;letter-spacing:-0.45px">R3_2</div><svg style="position:absolute;left:25px;top:255.09999999999997px;" width="12" height="14" viewBox="0 0 12 14"><path d="M0.5 0.5 H8 L11.5 4 V13.5 H0.5 Z" fill="#f4f4f4" stroke="#9a9a9a" stroke-width="1"/><path d="M3 5 H9 M3 7.5 H9 M3 10 H9" stroke="#b0b0b0" stroke-width="0.9"/></svg><svg style="position:absolute;left:40px;top:256.09999999999997px;" width="12" height="12" viewBox="0 0 12 12"><rect x="0.5" y="0.5" width="11" height="11" fill="#fff" stroke="#2a4a7a" stroke-width="1"/><path d="M2.5 6 L5 8.5 L9.5 3" fill="none" stroke="#1a9a1a" stroke-width="1.8"/></svg><div style="position:absolute;left:55px;top:255.09999999999997px;font-size:12px;line-height:12px;color:#333;white-space:nowrap;line-height:14px;letter-spacing:-0.45px">R5_1</div><svg style="position:absolute;left:25px;top:276.99999999999994px;" width="12" height="14" viewBox="0 0 12 14"><path d="M0.5 0.5 H8 L11.5 4 V13.5 H0.5 Z" fill="#f4f4f4" stroke="#9a9a9a" stroke-width="1"/><path d="M3 5 H9 M3 7.5 H9 M3 10 H9" stroke="#b0b0b0" stroke-width="0.9"/></svg><svg style="position:absolute;left:40px;top:277.99999999999994px;" width="12" height="12" viewBox="0 0 12 12"><rect x="0.5" y="0.5" width="11" height="11" fill="#fff" stroke="#2a4a7a" stroke-width="1"/><path d="M2.5 6 L5 8.5 L9.5 3" fill="none" stroke="#1a9a1a" stroke-width="1.8"/></svg><div style="position:absolute;left:55px;top:276.99999999999994px;font-size:12px;line-height:12px;color:#333;white-space:nowrap;line-height:14px;letter-spacing:-0.45px">R5_2</div><svg style="position:absolute;left:25px;top:298.8999999999999px;" width="12" height="14" viewBox="0 0 12 14"><path d="M0.5 0.5 H8 L11.5 4 V13.5 H0.5 Z" fill="#f4f4f4" stroke="#9a9a9a" stroke-width="1"/><path d="M3 5 H9 M3 7.5 H9 M3 10 H9" stroke="#b0b0b0" stroke-width="0.9"/></svg><svg style="position:absolute;left:40px;top:299.8999999999999px;" width="12" height="12" viewBox="0 0 12 12"><rect x="0.5" y="0.5" width="11" height="11" fill="#fff" stroke="#2a4a7a" stroke-width="1"/><path d="M2.5 6 L5 8.5 L9.5 3" fill="none" stroke="#1a9a1a" stroke-width="1.8"/></svg><div style="position:absolute;left:55px;top:298.8999999999999px;font-size:12px;line-height:12px;color:#333;white-space:nowrap;line-height:14px;letter-spacing:-0.45px">R6_1</div><svg style="position:absolute;left:25px;top:320.8px;" width="12" height="14" viewBox="0 0 12 14"><path d="M0.5 0.5 H8 L11.5 4 V13.5 H0.5 Z" fill="#f4f4f4" stroke="#9a9a9a" stroke-width="1"/><path d="M3 5 H9 M3 7.5 H9 M3 10 H9" stroke="#b0b0b0" stroke-width="0.9"/></svg><svg style="position:absolute;left:40px;top:321.8px;" width="12" height="12" viewBox="0 0 12 12"><rect x="0.5" y="0.5" width="11" height="11" fill="#fff" stroke="#2a4a7a" stroke-width="1"/><path d="M2.5 6 L5 8.5 L9.5 3" fill="none" stroke="#1a9a1a" stroke-width="1.8"/></svg><div style="position:absolute;left:55px;top:320.8px;font-size:12px;line-height:12px;color:#333;white-space:nowrap;line-height:14px;letter-spacing:-0.45px">S$2171</div><svg style="position:absolute;left:25px;top:342.7px;" width="12" height="14" viewBox="0 0 12 14"><path d="M0.5 0.5 H8 L11.5 4 V13.5 H0.5 Z" fill="#f4f4f4" stroke="#9a9a9a" stroke-width="1"/><path d="M3 5 H9 M3 7.5 H9 M3 10 H9" stroke="#b0b0b0" stroke-width="0.9"/></svg><svg style="position:absolute;left:40px;top:343.7px;" width="12" height="12" viewBox="0 0 12 12"><rect x="0.5" y="0.5" width="11" height="11" fill="#fff" stroke="#2a4a7a" stroke-width="1"/><path d="M2.5 6 L5 8.5 L9.5 3" fill="none" stroke="#1a9a1a" stroke-width="1.8"/></svg><div style="position:absolute;left:55px;top:342.7px;font-size:12px;line-height:12px;color:#333;white-space:nowrap;line-height:14px;letter-spacing:-0.45px">S$2173</div><svg style="position:absolute;left:25px;top:364.59999999999997px;" width="12" height="14" viewBox="0 0 12 14"><path d="M0.5 0.5 H8 L11.5 4 V13.5 H0.5 Z" fill="#f4f4f4" stroke="#9a9a9a" stroke-width="1"/><path d="M3 5 H9 M3 7.5 H9 M3 10 H9" stroke="#b0b0b0" stroke-width="0.9"/></svg><svg style="position:absolute;left:40px;top:365.59999999999997px;" width="12" height="12" viewBox="0 0 12 12"><rect x="0.5" y="0.5" width="11" height="11" fill="#fff" stroke="#2a4a7a" stroke-width="1"/><path d="M2.5 6 L5 8.5 L9.5 3" fill="none" stroke="#1a9a1a" stroke-width="1.8"/></svg><div style="position:absolute;left:55px;top:364.59999999999997px;font-size:12px;line-height:12px;color:#333;white-space:nowrap;line-height:14px;letter-spacing:-0.45px">S$2175</div><svg style="position:absolute;left:25px;top:386.49999999999994px;" width="12" height="14" viewBox="0 0 12 14"><path d="M0.5 0.5 H8 L11.5 4 V13.5 H0.5 Z" fill="#f4f4f4" stroke="#9a9a9a" stroke-width="1"/><path d="M3 5 H9 M3 7.5 H9 M3 10 H9" stroke="#b0b0b0" stroke-width="0.9"/></svg><svg style="position:absolute;left:40px;top:387.49999999999994px;" width="12" height="12" viewBox="0 0 12 12"><rect x="0.5" y="0.5" width="11" height="11" fill="#fff" stroke="#2a4a7a" stroke-width="1"/><path d="M2.5 6 L5 8.5 L9.5 3" fill="none" stroke="#1a9a1a" stroke-width="1.8"/></svg><div style="position:absolute;left:55px;top:386.49999999999994px;font-size:12px;line-height:12px;color:#333;white-space:nowrap;line-height:14px;letter-spacing:-0.45px">U2_4</div><svg style="position:absolute;left:25px;top:408.3999999999999px;" width="12" height="14" viewBox="0 0 12 14"><path d="M0.5 0.5 H8 L11.5 4 V13.5 H0.5 Z" fill="#f4f4f4" stroke="#9a9a9a" stroke-width="1"/><path d="M3 5 H9 M3 7.5 H9 M3 10 H9" stroke="#b0b0b0" stroke-width="0.9"/></svg><svg style="position:absolute;left:40px;top:409.3999999999999px;" width="12" height="12" viewBox="0 0 12 12"><rect x="0.5" y="0.5" width="11" height="11" fill="#fff" stroke="#2a4a7a" stroke-width="1"/><path d="M2.5 6 L5 8.5 L9.5 3" fill="none" stroke="#1a9a1a" stroke-width="1.8"/></svg><div style="position:absolute;left:55px;top:408.3999999999999px;font-size:12px;line-height:12px;color:#333;white-space:nowrap;line-height:14px;letter-spacing:-0.45px">VCC</div><svg style="position:absolute;left:4px;top:433.3px;" width="5" height="8" viewBox="0 0 5 8"><path d="M0 0 L5 4 L0 8 Z" fill="#b0b0b0"/></svg><svg style="position:absolute;left:15px;top:430.3px;" width="16" height="13" viewBox="0 0 16 13"><path d="M0.8 2.5 H6 L7.5 4 H14.5 V12.2 H0.8 Z" fill="#f3dc7a" stroke="#a88a2a" stroke-width="1"/><path d="M0.8 6 H15.2 L14.5 12.2" fill="#f8e9a8" stroke="#a88a2a" stroke-width="0.9"/></svg><div style="position:absolute;left:31px;top:430.3px;font-size:12px;line-height:12px;color:#333;white-space:nowrap;line-height:14px;letter-spacing:-0.45px">DRC错误 (0)</div></div><div style="position:absolute;left:1051.5px;top:112.8px;width:16px;height:452.2px;background:#f0f0f0;border-left:1px solid #e4e4e4;box-sizing:border-box"></div><svg style="position:absolute;left:1055.5px;top:120.8px;" width="7" height="4" viewBox="0 0 7 4"><path d="M0 4 L3.5 0 L7 4 Z" fill="#606060"/></svg><svg style="position:absolute;left:1055.5px;top:553.0px;" width="7" height="4" viewBox="0 0 7 4"><path d="M0 0 L3.5 4 L7 0 Z" fill="#606060"/></svg><div style="position:absolute;left:1053.0px;top:363.5px;width:13px;height:182.5px;background:linear-gradient(to right,#e8e8e8,#d4d4d4);border:1px solid #b8b8b8;border-radius:2px;box-sizing:border-box"></div><svg style="position:absolute;left:1056.5px;top:451.75px;" width="6" height="6" viewBox="0 0 6 6"><path d="M0 0.5 H6 M0 3 H6 M0 5.5 H6" stroke="#777" stroke-width="1"/></svg><div style="position:absolute;left:930px;top:566px;width:121.5px;height:14px;background:#f0f0f0;border-top:1px solid #e4e4e4;box-sizing:border-box"></div><svg style="position:absolute;left:935px;top:570px;" width="4" height="7" viewBox="0 0 4 7"><path d="M4 0 L0 3.5 L4 7 Z" fill="#606060"/></svg><svg style="position:absolute;left:1041.5px;top:570px;" width="4" height="7" viewBox="0 0 4 7"><path d="M0 0 L4 3.5 L0 7 Z" fill="#606060"/></svg><div style="position:absolute;left:947.7px;top:567px;width:56.299999999999955px;height:13px;background:linear-gradient(to bottom,#e8e8e8,#cfcfcf);border:1px solid #b8b8b8;border-radius:2px;box-sizing:border-box"></div><svg style="position:absolute;left:972.85px;top:570px;" width="6" height="6" viewBox="0 0 6 6"><path d="M0.5 0 V6 M3 0 V6 M5.5 0 V6" stroke="#777" stroke-width="1"/></svg><div style="position:absolute;left:1051.5px;top:566px;width:16px;height:14px;background:#f0f0f0"></div><div style="position:absolute;left:930px;top:581px;width:137px;height:4px;background-color:#dadada;background-image:radial-gradient(circle at 1.5px 1.5px,#ffffff 0.9px,transparent 1.1px);background-size:3.5px 3px"></div><svg style="position:absolute;left:933px;top:590.4px;" width="6" height="6" viewBox="0 0 6 6"><path d="M6 0 V6 H0 Z" fill="#b0b0b0"/></svg><svg style="position:absolute;left:944px;top:586.4px;" width="16" height="13" viewBox="0 0 16 13"><path d="M0.8 2.5 H6 L7.5 4 H14.5 V12.2 H0.8 Z" fill="#f3dc7a" stroke="#a88a2a" stroke-width="1"/><path d="M0.8 6 H15.2 L14.5 12.2" fill="#f8e9a8" stroke="#a88a2a" stroke-width="0.9"/></svg><div style="position:absolute;left:961.5px;top:586.4px;font-size:12px;line-height:12px;color:#333;white-space:nowrap;line-height:14px;letter-spacing:-0.45px">网络引脚</div><svg style="position:absolute;left:955px;top:604.8px;" width="12" height="14" viewBox="0 0 12 14"><path d="M0.5 0.5 H8 L11.5 4 V13.5 H0.5 Z" fill="#f7eaa0" stroke="#b59a3a" stroke-width="1"/><path d="M3 5 H9 M3 7.5 H9 M3 10 H9" stroke="#6a5a20" stroke-width="0.9"/></svg><div style="position:absolute;left:970px;top:604.8px;font-size:12px;line-height:12px;color:#333;white-space:nowrap;line-height:14px;letter-spacing:-0.45px">C5 : 1</div><svg style="position:absolute;left:955px;top:623.7299999999999px;" width="12" height="14" viewBox="0 0 12 14"><path d="M0.5 0.5 H8 L11.5 4 V13.5 H0.5 Z" fill="#f7eaa0" stroke="#b59a3a" stroke-width="1"/><path d="M3 5 H9 M3 7.5 H9 M3 10 H9" stroke="#6a5a20" stroke-width="0.9"/></svg><div style="position:absolute;left:970px;top:623.7299999999999px;font-size:12px;line-height:12px;color:#333;white-space:nowrap;line-height:14px;letter-spacing:-0.45px">R2 : 2</div><svg style="position:absolute;left:955px;top:642.66px;" width="12" height="14" viewBox="0 0 12 14"><path d="M0.5 0.5 H8 L11.5 4 V13.5 H0.5 Z" fill="#f7eaa0" stroke="#b59a3a" stroke-width="1"/><path d="M3 5 H9 M3 7.5 H9 M3 10 H9" stroke="#6a5a20" stroke-width="0.9"/></svg><div style="position:absolute;left:970px;top:642.66px;font-size:12px;line-height:12px;color:#333;white-space:nowrap;line-height:14px;letter-spacing:-0.45px">U2 : 2</div><svg style="position:absolute;left:955px;top:661.5899999999999px;" width="12" height="14" viewBox="0 0 12 14"><path d="M0.5 0.5 H8 L11.5 4 V13.5 H0.5 Z" fill="#f7eaa0" stroke="#b59a3a" stroke-width="1"/><path d="M3 5 H9 M3 7.5 H9 M3 10 H9" stroke="#6a5a20" stroke-width="0.9"/></svg><div style="position:absolute;left:970px;top:661.5899999999999px;font-size:12px;line-height:12px;color:#333;white-space:nowrap;line-height:14px;letter-spacing:-0.45px">U2 : 6</div><svg style="position:absolute;left:964px;top:96px;" width="14" height="13" viewBox="0 0 14 13"><rect x="3.5" y="0.8" width="7" height="11.4" rx="1" fill="none" stroke="#333" stroke-width="1.3"/><path d="M0.5 3.5 H3.5 M0.5 6.5 H3.5 M0.5 9.5 H3.5 M10.5 3.5 H13.5 M10.5 6.5 H13.5 M10.5 9.5 H13.5" stroke="#c8902a" stroke-width="1.2"/></svg><svg style="position:absolute;left:992px;top:96px;" width="14" height="13" viewBox="0 0 14 13"><circle cx="3" cy="3" r="2" fill="none" stroke="#333" stroke-width="1.2"/><circle cx="11" cy="6.5" r="2" fill="none" stroke="#333" stroke-width="1.2"/><circle cx="3" cy="10" r="2" fill="none" stroke="#333" stroke-width="1.2"/><path d="M5 3.5 L9 6 M5 9.5 L9 7" stroke="#c8902a" stroke-width="1.2"/></svg><svg style="position:absolute;left:1019px;top:95px;" width="14" height="14" viewBox="0 0 14 14"><circle cx="7" cy="7" r="6" fill="none" stroke="#333" stroke-width="1.3"/><path d="M7 3 V8" stroke="#c8902a" stroke-width="1.5"/><circle cx="7" cy="10.3" r="0.9" fill="#c8902a"/></svg><div style="position:absolute;left:193px;top:47px;width:662px;height:27px;background:#dcdcdc;border-bottom:1px solid #c8c8c8;box-sizing:border-box"></div><div style="position:absolute;left:193px;top:47px;width:61px;height:26px;background:#ebebeb"></div><div style="position:absolute;left:200px;top:54px;font-size:13px;line-height:13px;color:#333;white-space:nowrap;line-height:14px">开始</div><div style="position:absolute;left:254px;top:47px;width:151.7px;height:26px;background:#f6f6f6"></div><svg style="position:absolute;left:264px;top:55px;" width="14" height="11" viewBox="0 0 14 11"><path d="M0.6 1.5 H5 L6 2.8 H13.4 V10.4 H0.6 Z" fill="#f3d86a" stroke="#a88a2a" stroke-width="1"/><path d="M0.6 4.5 H13.4" stroke="#c8aa40" stroke-width="1"/></svg><div style="position:absolute;left:285.5px;top:53.5px;font-size:13px;line-height:13px;color:#333;white-space:nowrap;line-height:14px">555 Timer Police</div><div style="position:absolute;left:1073px;top:47px;width:662px;height:27px;background:#dcdcdc;border-bottom:1px solid #c8c8c8;box-sizing:border-box"></div><div style="position:absolute;left:1073px;top:47px;width:61px;height:26px;background:#ebebeb"></div><div style="position:absolute;left:1080px;top:54px;font-size:13px;line-height:13px;color:#333;white-space:nowrap;line-height:14px">开始</div><div style="position:absolute;left:1134px;top:47px;width:151.7px;height:26px;background:#f6f6f6"></div><svg style="position:absolute;left:1144px;top:54px;" width="15" height="14" viewBox="0 0 15 14"><rect x="0.7" y="0.7" width="13.6" height="12.6" fill="#e8f4d8" stroke="#3a8a3a" stroke-width="1.3"/><path d="M3 4 H11 M3 7 L7 10 H11" fill="none" stroke="#c89a20" stroke-width="1.3"/></svg><div style="position:absolute;left:1165.5px;top:53.5px;font-size:13px;line-height:13px;color:#333;white-space:nowrap;line-height:14px">PCB1</div><div style="position:absolute;left:193px;top:74px;width:662px;height:22px;background:#f4f4f4"></div><svg style="position:absolute;left:0;top:0;overflow:hidden" width="1747" height="100"><defs><clipPath id="rt213"><rect x="193" y="74" width="662" height="22"/></clipPath></defs><g clip-path="url(#rt213)"><path d="M217.0 90 V95.5" stroke="#8a8a8a" stroke-width="1"/><path d="M226.5 90 V95.5" stroke="#8a8a8a" stroke-width="1"/><path d="M236.0 90 V95.5" stroke="#8a8a8a" stroke-width="1"/><path d="M245.5 90 V95.5" stroke="#8a8a8a" stroke-width="1"/><path d="M254.9 84 V95.5" stroke="#8a8a8a" stroke-width="1"/><path d="M264.4 90 V95.5" stroke="#8a8a8a" stroke-width="1"/><path d="M273.9 90 V95.5" stroke="#8a8a8a" stroke-width="1"/><path d="M283.4 90 V95.5" stroke="#8a8a8a" stroke-width="1"/><path d="M292.9 90 V95.5" stroke="#8a8a8a" stroke-width="1"/><path d="M302.4 79 V95.5" stroke="#8a8a8a" stroke-width="1"/><text x="304.4" y="87" font-family="Liberation Sans" font-size="10" fill="#667788">500</text><path d="M311.9 90 V95.5" stroke="#8a8a8a" stroke-width="1"/><path d="M321.4 90 V95.5" stroke="#8a8a8a" stroke-width="1"/><path d="M330.9 90 V95.5" stroke="#8a8a8a" stroke-width="1"/><path d="M340.4 90 V95.5" stroke="#8a8a8a" stroke-width="1"/><path d="M349.8 84 V95.5" stroke="#8a8a8a" stroke-width="1"/><path d="M359.3 90 V95.5" stroke="#8a8a8a" stroke-width="1"/><path d="M368.8 90 V95.5" stroke="#8a8a8a" stroke-width="1"/><path d="M378.3 90 V95.5" stroke="#8a8a8a" stroke-width="1"/><path d="M387.8 90 V95.5" stroke="#8a8a8a" stroke-width="1"/><path d="M397.3 79 V95.5" stroke="#8a8a8a" stroke-width="1"/><text x="399.3" y="87" font-family="Liberation Sans" font-size="10" fill="#667788">600</text><path d="M406.8 90 V95.5" stroke="#8a8a8a" stroke-width="1"/><path d="M416.3 90 V95.5" stroke="#8a8a8a" stroke-width="1"/><path d="M425.8 90 V95.5" stroke="#8a8a8a" stroke-width="1"/><path d="M435.3 90 V95.5" stroke="#8a8a8a" stroke-width="1"/><path d="M444.8 84 V95.5" stroke="#8a8a8a" stroke-width="1"/><path d="M454.2 90 V95.5" stroke="#8a8a8a" stroke-width="1"/><path d="M463.7 90 V95.5" stroke="#8a8a8a" stroke-width="1"/><path d="M473.2 90 V95.5" stroke="#8a8a8a" stroke-width="1"/><path d="M482.7 90 V95.5" stroke="#8a8a8a" stroke-width="1"/><path d="M492.2 79 V95.5" stroke="#8a8a8a" stroke-width="1"/><text x="494.2" y="87" font-family="Liberation Sans" font-size="10" fill="#667788">700</text><path d="M501.7 90 V95.5" stroke="#8a8a8a" stroke-width="1"/><path d="M511.2 90 V95.5" stroke="#8a8a8a" stroke-width="1"/><path d="M520.7 90 V95.5" stroke="#8a8a8a" stroke-width="1"/><path d="M530.2 90 V95.5" stroke="#8a8a8a" stroke-width="1"/><path d="M539.6 84 V95.5" stroke="#8a8a8a" stroke-width="1"/><path d="M549.1 90 V95.5" stroke="#8a8a8a" stroke-width="1"/><path d="M558.6 90 V95.5" stroke="#8a8a8a" stroke-width="1"/><path d="M568.1 90 V95.5" stroke="#8a8a8a" stroke-width="1"/><path d="M577.6 90 V95.5" stroke="#8a8a8a" stroke-width="1"/><path d="M587.1 79 V95.5" stroke="#8a8a8a" stroke-width="1"/><text x="589.1" y="87" font-family="Liberation Sans" font-size="10" fill="#667788">800</text><path d="M596.6 90 V95.5" stroke="#8a8a8a" stroke-width="1"/><path d="M606.1 90 V95.5" stroke="#8a8a8a" stroke-width="1"/><path d="M615.6 90 V95.5" stroke="#8a8a8a" stroke-width="1"/><path d="M625.1 90 V95.5" stroke="#8a8a8a" stroke-width="1"/><path d="M634.5 84 V95.5" stroke="#8a8a8a" stroke-width="1"/><path d="M644.0 90 V95.5" stroke="#8a8a8a" stroke-width="1"/><path d="M653.5 90 V95.5" stroke="#8a8a8a" stroke-width="1"/><path d="M663.0 90 V95.5" stroke="#8a8a8a" stroke-width="1"/><path d="M672.5 90 V95.5" stroke="#8a8a8a" stroke-width="1"/><path d="M682.0 79 V95.5" stroke="#8a8a8a" stroke-width="1"/><text x="684.0" y="87" font-family="Liberation Sans" font-size="10" fill="#667788">900</text><path d="M691.5 90 V95.5" stroke="#8a8a8a" stroke-width="1"/><path d="M701.0 90 V95.5" stroke="#8a8a8a" stroke-width="1"/><path d="M710.5 90 V95.5" stroke="#8a8a8a" stroke-width="1"/><path d="M720.0 90 V95.5" stroke="#8a8a8a" stroke-width="1"/><path d="M729.5 84 V95.5" stroke="#8a8a8a" stroke-width="1"/><path d="M738.9 90 V95.5" stroke="#8a8a8a" stroke-width="1"/><path d="M748.4 90 V95.5" stroke="#8a8a8a" stroke-width="1"/><path d="M757.9 90 V95.5" stroke="#8a8a8a" stroke-width="1"/><path d="M767.4 90 V95.5" stroke="#8a8a8a" stroke-width="1"/><path d="M776.9 79 V95.5" stroke="#8a8a8a" stroke-width="1"/><text x="778.9" y="87" font-family="Liberation Sans" font-size="10" fill="#667788">1000</text><path d="M786.4 90 V95.5" stroke="#8a8a8a" stroke-width="1"/><path d="M795.9 90 V95.5" stroke="#8a8a8a" stroke-width="1"/><path d="M805.4 90 V95.5" stroke="#8a8a8a" stroke-width="1"/><path d="M814.9 90 V95.5" stroke="#8a8a8a" stroke-width="1"/><path d="M824.4 84 V95.5" stroke="#8a8a8a" stroke-width="1"/><path d="M833.8 90 V95.5" stroke="#8a8a8a" stroke-width="1"/><path d="M843.3 90 V95.5" stroke="#8a8a8a" stroke-width="1"/><path d="M852.8 90 V95.5" stroke="#8a8a8a" stroke-width="1"/><path d="M736.5 79 V95.5" stroke="#2a62d0" stroke-width="1.5"/><path d="M213 95.5 H855" stroke="#8a8a8a" stroke-width="1"/></g></svg><div style="position:absolute;left:193px;top:96px;width:20px;height:687px;background:#f4f4f4"></div><svg style="position:absolute;left:0;top:0" width="1747" height="785"><defs><clipPath id="rl193"><rect x="193" y="96" width="21" height="687"/></clipPath></defs><g clip-path="url(#rl193)"><path d="M208 104.2 H213.5" stroke="#8a8a8a" stroke-width="1"/><path d="M208 113.8 H213.5" stroke="#8a8a8a" stroke-width="1"/><path d="M208 123.3 H213.5" stroke="#8a8a8a" stroke-width="1"/><path d="M202 132.8 H213.5" stroke="#8a8a8a" stroke-width="1"/><path d="M208 142.3 H213.5" stroke="#8a8a8a" stroke-width="1"/><path d="M208 151.8 H213.5" stroke="#8a8a8a" stroke-width="1"/><path d="M208 161.4 H213.5" stroke="#8a8a8a" stroke-width="1"/><path d="M208 170.9 H213.5" stroke="#8a8a8a" stroke-width="1"/><path d="M196 180.4 H213.5" stroke="#8a8a8a" stroke-width="1"/><text x="0" y="0" transform="translate(197,182.4) rotate(90)" font-family="Liberation Sans" font-size="10" fill="#667788">-100</text><path d="M208 189.9 H213.5" stroke="#8a8a8a" stroke-width="1"/><path d="M208 199.4 H213.5" stroke="#8a8a8a" stroke-width="1"/><path d="M208 209.0 H213.5" stroke="#8a8a8a" stroke-width="1"/><path d="M208 218.5 H213.5" stroke="#8a8a8a" stroke-width="1"/><path d="M202 228.0 H213.5" stroke="#8a8a8a" stroke-width="1"/><path d="M208 237.5 H213.5" stroke="#8a8a8a" stroke-width="1"/><path d="M208 247.0 H213.5" stroke="#8a8a8a" stroke-width="1"/><path d="M208 256.6 H213.5" stroke="#8a8a8a" stroke-width="1"/><path d="M208 266.1 H213.5" stroke="#8a8a8a" stroke-width="1"/><path d="M196 275.6 H213.5" stroke="#8a8a8a" stroke-width="1"/><text x="0" y="0" transform="translate(197,277.6) rotate(90)" font-family="Liberation Sans" font-size="10" fill="#667788">-200</text><path d="M208 285.1 H213.5" stroke="#8a8a8a" stroke-width="1"/><path d="M208 294.6 H213.5" stroke="#8a8a8a" stroke-width="1"/><path d="M208 304.2 H213.5" stroke="#8a8a8a" stroke-width="1"/><path d="M208 313.7 H213.5" stroke="#8a8a8a" stroke-width="1"/><path d="M202 323.2 H213.5" stroke="#8a8a8a" stroke-width="1"/><path d="M208 332.7 H213.5" stroke="#8a8a8a" stroke-width="1"/><path d="M208 342.2 H213.5" stroke="#8a8a8a" stroke-width="1"/><path d="M208 351.8 H213.5" stroke="#8a8a8a" stroke-width="1"/><path d="M208 361.3 H213.5" stroke="#8a8a8a" stroke-width="1"/><path d="M196 370.8 H213.5" stroke="#8a8a8a" stroke-width="1"/><text x="0" y="0" transform="translate(197,372.8) rotate(90)" font-family="Liberation Sans" font-size="10" fill="#667788">-300</text><path d="M208 380.3 H213.5" stroke="#8a8a8a" stroke-width="1"/><path d="M208 389.8 H213.5" stroke="#8a8a8a" stroke-width="1"/><path d="M208 399.4 H213.5" stroke="#8a8a8a" stroke-width="1"/><path d="M208 408.9 H213.5" stroke="#8a8a8a" stroke-width="1"/><path d="M202 418.4 H213.5" stroke="#8a8a8a" stroke-width="1"/><path d="M208 427.9 H213.5" stroke="#8a8a8a" stroke-width="1"/><path d="M208 437.4 H213.5" stroke="#8a8a8a" stroke-width="1"/><path d="M208 447.0 H213.5" stroke="#8a8a8a" stroke-width="1"/><path d="M208 456.5 H213.5" stroke="#8a8a8a" stroke-width="1"/><path d="M196 466.0 H213.5" stroke="#8a8a8a" stroke-width="1"/><text x="0" y="0" transform="translate(197,468.0) rotate(90)" font-family="Liberation Sans" font-size="10" fill="#667788">-400</text><path d="M208 475.5 H213.5" stroke="#8a8a8a" stroke-width="1"/><path d="M208 485.0 H213.5" stroke="#8a8a8a" stroke-width="1"/><path d="M208 494.6 H213.5" stroke="#8a8a8a" stroke-width="1"/><path d="M208 504.1 H213.5" stroke="#8a8a8a" stroke-width="1"/><path d="M202 513.6 H213.5" stroke="#8a8a8a" stroke-width="1"/><path d="M208 523.1 H213.5" stroke="#8a8a8a" stroke-width="1"/><path d="M208 532.6 H213.5" stroke="#8a8a8a" stroke-width="1"/><path d="M208 542.2 H213.5" stroke="#8a8a8a" stroke-width="1"/><path d="M208 551.7 H213.5" stroke="#8a8a8a" stroke-width="1"/><path d="M196 561.2 H213.5" stroke="#8a8a8a" stroke-width="1"/><text x="0" y="0" transform="translate(197,563.2) rotate(90)" font-family="Liberation Sans" font-size="10" fill="#667788">-500</text><path d="M208 570.7 H213.5" stroke="#8a8a8a" stroke-width="1"/><path d="M208 580.2 H213.5" stroke="#8a8a8a" stroke-width="1"/><path d="M208 589.8 H213.5" stroke="#8a8a8a" stroke-width="1"/><path d="M208 599.3 H213.5" stroke="#8a8a8a" stroke-width="1"/><path d="M202 608.8 H213.5" stroke="#8a8a8a" stroke-width="1"/><path d="M208 618.3 H213.5" stroke="#8a8a8a" stroke-width="1"/><path d="M208 627.8 H213.5" stroke="#8a8a8a" stroke-width="1"/><path d="M208 637.4 H213.5" stroke="#8a8a8a" stroke-width="1"/><path d="M208 646.9 H213.5" stroke="#8a8a8a" stroke-width="1"/><path d="M196 656.4 H213.5" stroke="#8a8a8a" stroke-width="1"/><text x="0" y="0" transform="translate(197,658.4) rotate(90)" font-family="Liberation Sans" font-size="10" fill="#667788">-600</text><path d="M208 665.9 H213.5" stroke="#8a8a8a" stroke-width="1"/><path d="M208 675.4 H213.5" stroke="#8a8a8a" stroke-width="1"/><path d="M208 685.0 H213.5" stroke="#8a8a8a" stroke-width="1"/><path d="M208 694.5 H213.5" stroke="#8a8a8a" stroke-width="1"/><path d="M202 704.0 H213.5" stroke="#8a8a8a" stroke-width="1"/><path d="M208 713.5 H213.5" stroke="#8a8a8a" stroke-width="1"/><path d="M208 723.0 H213.5" stroke="#8a8a8a" stroke-width="1"/><path d="M208 732.6 H213.5" stroke="#8a8a8a" stroke-width="1"/><path d="M208 742.1 H213.5" stroke="#8a8a8a" stroke-width="1"/><path d="M196 751.6 H213.5" stroke="#8a8a8a" stroke-width="1"/><text x="0" y="0" transform="translate(197,753.6) rotate(90)" font-family="Liberation Sans" font-size="10" fill="#667788">-700</text><path d="M208 761.1 H213.5" stroke="#8a8a8a" stroke-width="1"/><path d="M208 770.6 H213.5" stroke="#8a8a8a" stroke-width="1"/><path d="M208 780.2 H213.5" stroke="#8a8a8a" stroke-width="1"/><path d="M196 471.8 H213.5" stroke="#2a62d0" stroke-width="1.5"/><path d="M213.5 96 V783" stroke="#8a8a8a" stroke-width="1"/></g></svg><div style="position:absolute;left:1073px;top:74px;width:661px;height:22px;background:#f4f4f4"></div><svg style="position:absolute;left:0;top:0;overflow:hidden" width="1747" height="100"><defs><clipPath id="rt1093"><rect x="1073" y="74" width="661" height="22"/></clipPath></defs><g clip-path="url(#rt1093)"><path d="M1098.1 84 V95.5" stroke="#8a8a8a" stroke-width="1"/><path d="M1107.6 90 V95.5" stroke="#8a8a8a" stroke-width="1"/><path d="M1117.0 90 V95.5" stroke="#8a8a8a" stroke-width="1"/><path d="M1126.5 90 V95.5" stroke="#8a8a8a" stroke-width="1"/><path d="M1136.0 90 V95.5" stroke="#8a8a8a" stroke-width="1"/><path d="M1145.5 79 V95.5" stroke="#8a8a8a" stroke-width="1"/><text x="1147.5" y="87" font-family="Liberation Sans" font-size="10" fill="#667788">8500</text><path d="M1155.0 90 V95.5" stroke="#8a8a8a" stroke-width="1"/><path d="M1164.5 90 V95.5" stroke="#8a8a8a" stroke-width="1"/><path d="M1174.0 90 V95.5" stroke="#8a8a8a" stroke-width="1"/><path d="M1183.4 90 V95.5" stroke="#8a8a8a" stroke-width="1"/><path d="M1192.9 84 V95.5" stroke="#8a8a8a" stroke-width="1"/><path d="M1202.4 90 V95.5" stroke="#8a8a8a" stroke-width="1"/><path d="M1211.9 90 V95.5" stroke="#8a8a8a" stroke-width="1"/><path d="M1221.4 90 V95.5" stroke="#8a8a8a" stroke-width="1"/><path d="M1230.9 90 V95.5" stroke="#8a8a8a" stroke-width="1"/><path d="M1240.3 79 V95.5" stroke="#8a8a8a" stroke-width="1"/><text x="1242.3" y="87" font-family="Liberation Sans" font-size="10" fill="#667788">9000</text><path d="M1249.8 90 V95.5" stroke="#8a8a8a" stroke-width="1"/><path d="M1259.3 90 V95.5" stroke="#8a8a8a" stroke-width="1"/><path d="M1268.8 90 V95.5" stroke="#8a8a8a" stroke-width="1"/><path d="M1278.3 90 V95.5" stroke="#8a8a8a" stroke-width="1"/><path d="M1287.8 84 V95.5" stroke="#8a8a8a" stroke-width="1"/><path d="M1297.3 90 V95.5" stroke="#8a8a8a" stroke-width="1"/><path d="M1306.7 90 V95.5" stroke="#8a8a8a" stroke-width="1"/><path d="M1316.2 90 V95.5" stroke="#8a8a8a" stroke-width="1"/><path d="M1325.7 90 V95.5" stroke="#8a8a8a" stroke-width="1"/><path d="M1335.2 79 V95.5" stroke="#8a8a8a" stroke-width="1"/><text x="1337.2" y="87" font-family="Liberation Sans" font-size="10" fill="#667788">9500</text><path d="M1344.7 90 V95.5" stroke="#8a8a8a" stroke-width="1"/><path d="M1354.2 90 V95.5" stroke="#8a8a8a" stroke-width="1"/><path d="M1363.7 90 V95.5" stroke="#8a8a8a" stroke-width="1"/><path d="M1373.1 90 V95.5" stroke="#8a8a8a" stroke-width="1"/><path d="M1382.6 84 V95.5" stroke="#8a8a8a" stroke-width="1"/><path d="M1392.1 90 V95.5" stroke="#8a8a8a" stroke-width="1"/><path d="M1401.6 90 V95.5" stroke="#8a8a8a" stroke-width="1"/><path d="M1411.1 90 V95.5" stroke="#8a8a8a" stroke-width="1"/><path d="M1420.6 90 V95.5" stroke="#8a8a8a" stroke-width="1"/><path d="M1430.0 79 V95.5" stroke="#8a8a8a" stroke-width="1"/><text x="1432.0" y="87" font-family="Liberation Sans" font-size="10" fill="#667788">10000</text><path d="M1439.5 90 V95.5" stroke="#8a8a8a" stroke-width="1"/><path d="M1449.0 90 V95.5" stroke="#8a8a8a" stroke-width="1"/><path d="M1458.5 90 V95.5" stroke="#8a8a8a" stroke-width="1"/><path d="M1468.0 90 V95.5" stroke="#8a8a8a" stroke-width="1"/><path d="M1477.5 84 V95.5" stroke="#8a8a8a" stroke-width="1"/><path d="M1487.0 90 V95.5" stroke="#8a8a8a" stroke-width="1"/><path d="M1496.4 90 V95.5" stroke="#8a8a8a" stroke-width="1"/><path d="M1505.9 90 V95.5" stroke="#8a8a8a" stroke-width="1"/><path d="M1515.4 90 V95.5" stroke="#8a8a8a" stroke-width="1"/><path d="M1524.9 79 V95.5" stroke="#8a8a8a" stroke-width="1"/><text x="1526.9" y="87" font-family="Liberation Sans" font-size="10" fill="#667788">10500</text><path d="M1534.4 90 V95.5" stroke="#8a8a8a" stroke-width="1"/><path d="M1543.9 90 V95.5" stroke="#8a8a8a" stroke-width="1"/><path d="M1553.4 90 V95.5" stroke="#8a8a8a" stroke-width="1"/><path d="M1562.8 90 V95.5" stroke="#8a8a8a" stroke-width="1"/><path d="M1572.3 84 V95.5" stroke="#8a8a8a" stroke-width="1"/><path d="M1581.8 90 V95.5" stroke="#8a8a8a" stroke-width="1"/><path d="M1591.3 90 V95.5" stroke="#8a8a8a" stroke-width="1"/><path d="M1600.8 90 V95.5" stroke="#8a8a8a" stroke-width="1"/><path d="M1610.3 90 V95.5" stroke="#8a8a8a" stroke-width="1"/><path d="M1619.8 79 V95.5" stroke="#8a8a8a" stroke-width="1"/><text x="1621.8" y="87" font-family="Liberation Sans" font-size="10" fill="#667788">11000</text><path d="M1629.2 90 V95.5" stroke="#8a8a8a" stroke-width="1"/><path d="M1638.7 90 V95.5" stroke="#8a8a8a" stroke-width="1"/><path d="M1648.2 90 V95.5" stroke="#8a8a8a" stroke-width="1"/><path d="M1657.7 90 V95.5" stroke="#8a8a8a" stroke-width="1"/><path d="M1667.2 84 V95.5" stroke="#8a8a8a" stroke-width="1"/><path d="M1676.7 90 V95.5" stroke="#8a8a8a" stroke-width="1"/><path d="M1686.1 90 V95.5" stroke="#8a8a8a" stroke-width="1"/><path d="M1695.6 90 V95.5" stroke="#8a8a8a" stroke-width="1"/><path d="M1705.1 90 V95.5" stroke="#8a8a8a" stroke-width="1"/><path d="M1714.6 79 V95.5" stroke="#8a8a8a" stroke-width="1"/><text x="1716.6" y="87" font-family="Liberation Sans" font-size="10" fill="#667788">11500</text><path d="M1724.1 90 V95.5" stroke="#8a8a8a" stroke-width="1"/><path d="M1500.4 79 V95.5" stroke="#2a62d0" stroke-width="1.5"/><path d="M1093 95.5 H1734" stroke="#8a8a8a" stroke-width="1"/></g></svg><div style="position:absolute;left:1073px;top:96px;width:20px;height:687px;background:#f4f4f4"></div><svg style="position:absolute;left:0;top:0" width="1747" height="785"><defs><clipPath id="rl1073"><rect x="1073" y="96" width="21" height="687"/></clipPath></defs><g clip-path="url(#rl1073)"><path d="M1088 101.8 H1093.5" stroke="#8a8a8a" stroke-width="1"/><path d="M1088 111.3 H1093.5" stroke="#8a8a8a" stroke-width="1"/><path d="M1088 120.9 H1093.5" stroke="#8a8a8a" stroke-width="1"/><path d="M1088 130.4 H1093.5" stroke="#8a8a8a" stroke-width="1"/><path d="M1082 139.9 H1093.5" stroke="#8a8a8a" stroke-width="1"/><path d="M1088 149.4 H1093.5" stroke="#8a8a8a" stroke-width="1"/><path d="M1088 158.9 H1093.5" stroke="#8a8a8a" stroke-width="1"/><path d="M1088 168.5 H1093.5" stroke="#8a8a8a" stroke-width="1"/><path d="M1088 178.0 H1093.5" stroke="#8a8a8a" stroke-width="1"/><path d="M1076 187.5 H1093.5" stroke="#8a8a8a" stroke-width="1"/><text x="0" y="0" transform="translate(1077,189.5) rotate(90)" font-family="Liberation Sans" font-size="10" fill="#667788">-4000</text><path d="M1088 197.0 H1093.5" stroke="#8a8a8a" stroke-width="1"/><path d="M1088 206.5 H1093.5" stroke="#8a8a8a" stroke-width="1"/><path d="M1088 216.1 H1093.5" stroke="#8a8a8a" stroke-width="1"/><path d="M1088 225.6 H1093.5" stroke="#8a8a8a" stroke-width="1"/><path d="M1082 235.1 H1093.5" stroke="#8a8a8a" stroke-width="1"/><path d="M1088 244.6 H1093.5" stroke="#8a8a8a" stroke-width="1"/><path d="M1088 254.1 H1093.5" stroke="#8a8a8a" stroke-width="1"/><path d="M1088 263.7 H1093.5" stroke="#8a8a8a" stroke-width="1"/><path d="M1088 273.2 H1093.5" stroke="#8a8a8a" stroke-width="1"/><path d="M1076 282.7 H1093.5" stroke="#8a8a8a" stroke-width="1"/><text x="0" y="0" transform="translate(1077,284.7) rotate(90)" font-family="Liberation Sans" font-size="10" fill="#667788">-4500</text><path d="M1088 292.2 H1093.5" stroke="#8a8a8a" stroke-width="1"/><path d="M1088 301.7 H1093.5" stroke="#8a8a8a" stroke-width="1"/><path d="M1088 311.3 H1093.5" stroke="#8a8a8a" stroke-width="1"/><path d="M1088 320.8 H1093.5" stroke="#8a8a8a" stroke-width="1"/><path d="M1082 330.3 H1093.5" stroke="#8a8a8a" stroke-width="1"/><path d="M1088 339.8 H1093.5" stroke="#8a8a8a" stroke-width="1"/><path d="M1088 349.3 H1093.5" stroke="#8a8a8a" stroke-width="1"/><path d="M1088 358.9 H1093.5" stroke="#8a8a8a" stroke-width="1"/><path d="M1088 368.4 H1093.5" stroke="#8a8a8a" stroke-width="1"/><path d="M1076 377.9 H1093.5" stroke="#8a8a8a" stroke-width="1"/><text x="0" y="0" transform="translate(1077,379.9) rotate(90)" font-family="Liberation Sans" font-size="10" fill="#667788">-5000</text><path d="M1088 387.4 H1093.5" stroke="#8a8a8a" stroke-width="1"/><path d="M1088 396.9 H1093.5" stroke="#8a8a8a" stroke-width="1"/><path d="M1088 406.5 H1093.5" stroke="#8a8a8a" stroke-width="1"/><path d="M1088 416.0 H1093.5" stroke="#8a8a8a" stroke-width="1"/><path d="M1082 425.5 H1093.5" stroke="#8a8a8a" stroke-width="1"/><path d="M1088 435.0 H1093.5" stroke="#8a8a8a" stroke-width="1"/><path d="M1088 444.5 H1093.5" stroke="#8a8a8a" stroke-width="1"/><path d="M1088 454.1 H1093.5" stroke="#8a8a8a" stroke-width="1"/><path d="M1088 463.6 H1093.5" stroke="#8a8a8a" stroke-width="1"/><path d="M1076 473.1 H1093.5" stroke="#8a8a8a" stroke-width="1"/><text x="0" y="0" transform="translate(1077,475.1) rotate(90)" font-family="Liberation Sans" font-size="10" fill="#667788">-5500</text><path d="M1088 482.6 H1093.5" stroke="#8a8a8a" stroke-width="1"/><path d="M1088 492.1 H1093.5" stroke="#8a8a8a" stroke-width="1"/><path d="M1088 501.7 H1093.5" stroke="#8a8a8a" stroke-width="1"/><path d="M1088 511.2 H1093.5" stroke="#8a8a8a" stroke-width="1"/><path d="M1082 520.7 H1093.5" stroke="#8a8a8a" stroke-width="1"/><path d="M1088 530.2 H1093.5" stroke="#8a8a8a" stroke-width="1"/><path d="M1088 539.7 H1093.5" stroke="#8a8a8a" stroke-width="1"/><path d="M1088 549.3 H1093.5" stroke="#8a8a8a" stroke-width="1"/><path d="M1088 558.8 H1093.5" stroke="#8a8a8a" stroke-width="1"/><path d="M1076 568.3 H1093.5" stroke="#8a8a8a" stroke-width="1"/><text x="0" y="0" transform="translate(1077,570.3) rotate(90)" font-family="Liberation Sans" font-size="10" fill="#667788">-6000</text><path d="M1088 577.8 H1093.5" stroke="#8a8a8a" stroke-width="1"/><path d="M1088 587.3 H1093.5" stroke="#8a8a8a" stroke-width="1"/><path d="M1088 596.9 H1093.5" stroke="#8a8a8a" stroke-width="1"/><path d="M1088 606.4 H1093.5" stroke="#8a8a8a" stroke-width="1"/><path d="M1082 615.9 H1093.5" stroke="#8a8a8a" stroke-width="1"/><path d="M1088 625.4 H1093.5" stroke="#8a8a8a" stroke-width="1"/><path d="M1088 634.9 H1093.5" stroke="#8a8a8a" stroke-width="1"/><path d="M1088 644.5 H1093.5" stroke="#8a8a8a" stroke-width="1"/><path d="M1088 654.0 H1093.5" stroke="#8a8a8a" stroke-width="1"/><path d="M1076 663.5 H1093.5" stroke="#8a8a8a" stroke-width="1"/><text x="0" y="0" transform="translate(1077,665.5) rotate(90)" font-family="Liberation Sans" font-size="10" fill="#667788">-6500</text><path d="M1088 673.0 H1093.5" stroke="#8a8a8a" stroke-width="1"/><path d="M1088 682.5 H1093.5" stroke="#8a8a8a" stroke-width="1"/><path d="M1088 692.1 H1093.5" stroke="#8a8a8a" stroke-width="1"/><path d="M1088 701.6 H1093.5" stroke="#8a8a8a" stroke-width="1"/><path d="M1082 711.1 H1093.5" stroke="#8a8a8a" stroke-width="1"/><path d="M1088 720.6 H1093.5" stroke="#8a8a8a" stroke-width="1"/><path d="M1088 730.1 H1093.5" stroke="#8a8a8a" stroke-width="1"/><path d="M1088 739.7 H1093.5" stroke="#8a8a8a" stroke-width="1"/><path d="M1088 749.2 H1093.5" stroke="#8a8a8a" stroke-width="1"/><path d="M1076 758.7 H1093.5" stroke="#8a8a8a" stroke-width="1"/><text x="0" y="0" transform="translate(1077,760.7) rotate(90)" font-family="Liberation Sans" font-size="10" fill="#667788">-7000</text><path d="M1088 768.2 H1093.5" stroke="#8a8a8a" stroke-width="1"/><path d="M1088 777.7 H1093.5" stroke="#8a8a8a" stroke-width="1"/><path d="M1076 484.3 H1093.5" stroke="#2a62d0" stroke-width="1.5"/><path d="M1093.5 96 V783" stroke="#8a8a8a" stroke-width="1"/></g></svg><div style="position:absolute;left:213.5px;top:96px;width:641px;height:687px;background-color:#fefefe;background-image:linear-gradient(to right,#f2f2f2 1px,transparent 1px),linear-gradient(to bottom,#f2f2f2 1px,transparent 1px);background-size:4.75px 4.75px;background-position:1px 1px"></div><svg style="position:absolute;left:0;top:0" width="1747" height="785"><defs><clipPath id="sc"><rect x="213.5" y="96" width="640.5" height="687"/></clipPath></defs><g clip-path="url(#sc)" font-family="Liberation Sans"><path d="M213 312.3 H728.5 V403" fill="none" stroke="#1e8c1e" stroke-width="1.3"/><path d="M728.5 441 V550 H213" fill="none" stroke="#1e8c1e" stroke-width="1.3"/><path d="M213 531.1 H323" fill="none" stroke="#1e8c1e" stroke-width="1.3"/><path d="M366 531.1 H586.4 V520" fill="none" stroke="#1e8c1e" stroke-width="1.3"/><path d="M586.4 485 V431.4 H428" fill="none" stroke="#1e8c1e" stroke-width="1.3"/><path d="M395 431.4 H386.3 V459.4 H332" fill="none" stroke="#1e8c1e" stroke-width="1.3"/><path d="M339.5 431.3 H332" fill="none" stroke="#1e8c1e" stroke-width="1.3"/><path d="M339.5 431.3 V379.5 H239.6 V479" fill="none" stroke="#1e8c1e" stroke-width="1.3"/><path d="M239.6 505.7 V550" fill="none" stroke="#1e8c1e" stroke-width="1.3"/><path d="M239.6 450.2 H251" fill="none" stroke="#1e8c1e" stroke-width="1.3"/><path d="M349 431.3 H339.5" fill="none" stroke="#1e8c1e" stroke-width="1.3"/><path d="M380 431.3 H386.3" fill="none" stroke="#1e8c1e" stroke-width="1.3"/><path d="M282.4 312.3 V395 M301.3 312.3 V395" fill="none" stroke="#1e8c1e" stroke-width="1.3"/><path d="M291.5 490 V550" fill="none" stroke="#1e8c1e" stroke-width="1.3"/><path d="M386.3 459.4 H395 M428 459.4 H448 M478 459.4 H510" fill="none" stroke="#1e8c1e" stroke-width="1.3"/><path d="M491.3 459.4 V486 M491.3 518 V550" fill="none" stroke="#1e8c1e" stroke-width="1.3"/><path d="M533.6 411.8 V441 M533.6 478 V550" fill="none" stroke="#1e8c1e" stroke-width="1.3"/><path d="M491.3 312.3 V322 M491.3 350 V362 M491.3 395 V411.8 H548.2 V395 M548.2 312.3 V355" fill="none" stroke="#1e8c1e" stroke-width="1.3"/><path d="M609.3 312.3 V362 M609.3 395 V412.3 H662.5 V395 M662.5 362 V312.3" fill="none" stroke="#1e8c1e" stroke-width="1.3"/><path d="M638.3 412.3 V441 M638.3 478 V550" fill="none" stroke="#1e8c1e" stroke-width="1.3"/><path d="M586.4 459.4 H609" fill="none" stroke="#1e8c1e" stroke-width="1.3"/><path d="M420 550 V572" fill="none" stroke="#1e8c1e" stroke-width="1.3"/><rect x="263.5" y="402.5" width="56.8" height="75.7" fill="none" stroke="#a01818" stroke-width="1.3" rx="1"/><path d="M282.4 395 V402.5 M301.3 395 V402.5 M251 431.3 H263.5 M251 450.2 H263.5 M251 468.8 H263.5 M320.3 431.3 H332 M320.3 459.4 H332 M291.5 478.2 V490" fill="none" stroke="#a01818" stroke-width="1.3"/><path d="M249 427.3 L257 435.3 M257 427.3 L249 435.3 M240 464.8 L248 472.8 M248 464.8 L240 472.8" fill="none" stroke="#40c040" stroke-width="1"/><path d="M239.6 479 V484 M239.6 490 V505.7" fill="none" stroke="#a01818" stroke-width="1.3"/><path d="M229 484 H250" fill="none" stroke="#a01818" stroke-width="1.4"/><path d="M229 493 Q239.6 485 250 493" fill="none" stroke="#a01818" stroke-width="1.4"/><path d="M229 480.5 H235 M232 477.5 V483.5" fill="none" stroke="#a01818" stroke-width="1"/><path d="M349 431.3 L351.6 426.8 L356.8 435.8 L361.9 426.8 L367.1 435.8 L372.2 426.8 L377.4 435.8 L380 431.3" fill="none" stroke="#a01818" stroke-width="1.3"/><path d="M395 431.4 L397.8 426.9 L403.2 435.9 L408.8 426.9 L414.2 435.9 L419.8 426.9 L425.2 435.9 L428 431.4" fill="none" stroke="#a01818" stroke-width="1.3"/><path d="M395 459.4 L397.8 454.9 L403.2 463.9 L408.8 454.9 L414.2 463.9 L419.8 454.9 L425.2 463.9 L428 459.4" fill="none" stroke="#a01818" stroke-width="1.3"/><path d="M448 459.4 L450.5 454.9 L455.5 463.9 L460.5 454.9 L465.5 463.9 L470.5 454.9 L475.5 463.9 L478 459.4" fill="none" stroke="#a01818" stroke-width="1.3"/><path d="M323 531.1 L326.6 526.6 L333.8 535.6 L340.9 526.6 L348.1 535.6 L355.2 526.6 L362.4 535.6 L366 531.1" fill="none" stroke="#a01818" stroke-width="1.3"/><path d="M491.3 486 L495.8 488.7 L486.8 494.0 L495.8 499.3 L486.8 504.7 L495.8 510.0 L486.8 515.3 L491.3 518" fill="none" stroke="#a01818" stroke-width="1.3"/><path d="M491.3 322 V329.8 M491.3 334.2 V350" fill="none" stroke="#a01818" stroke-width="1.3"/><path d="M484.3 329.8 H498.3 M484.3 334.2 H498.3" fill="none" stroke="#a01818" stroke-width="1.4"/><path d="M548.2 355 V378.5 M548.2 383 V395" fill="none" stroke="#a01818" stroke-width="1.3"/><path d="M541.2 378.6 H555.2 M541.2 383.0 H555.2" fill="none" stroke="#a01818" stroke-width="1.4"/><path d="M431 500 H446 M431 504 H446" fill="none" stroke="#a01818" stroke-width="1.4"/><path d="M491.3 362 V374 M491.3 384 V395" fill="none" stroke="#a01818" stroke-width="1.3"/><path d="M484.3 374 H498.3 L491.3 384 Z" fill="none" stroke="#a01818" stroke-width="1.3"/><path d="M484.3 384 H498.3" fill="none" stroke="#a01818" stroke-width="1.3"/><path d="M496.3 383 L502.3 389 M500.3 381 L506.3 387" fill="none" stroke="#a01818" stroke-width="1"/><path d="M502.3 389 l-3 -0.5 l2.5 -2.5 Z M506.3 387 l-3 -0.5 l2.5 -2.5 Z" fill="#a01818"/><path d="M609.3 362 V374 M609.3 384 V395" fill="none" stroke="#a01818" stroke-width="1.3"/><path d="M602.3 374 H616.3 L609.3 384 Z" fill="none" stroke="#a01818" stroke-width="1.3"/><path d="M602.3 384 H616.3" fill="none" stroke="#a01818" stroke-width="1.3"/><path d="M614.3 383 L620.3 389 M618.3 381 L624.3 387" fill="none" stroke="#a01818" stroke-width="1"/><path d="M620.3 389 l-3 -0.5 l2.5 -2.5 Z M624.3 387 l-3 -0.5 l2.5 -2.5 Z" fill="#a01818"/><path d="M662.5 362 V374 M662.5 384 V395" fill="none" stroke="#a01818" stroke-width="1.3"/><path d="M655.5 374 H669.5 L662.5 384 Z" fill="none" stroke="#a01818" stroke-width="1.3"/><path d="M655.5 384 H669.5" fill="none" stroke="#a01818" stroke-width="1.3"/><path d="M667.5 383 L673.5 389 M671.5 381 L677.5 387" fill="none" stroke="#a01818" stroke-width="1"/><path d="M673.5 389 l-3 -0.5 l2.5 -2.5 Z M677.5 387 l-3 -0.5 l2.5 -2.5 Z" fill="#a01818"/><path d="M728.5 403 V418.4 M728.5 426.4 V441" fill="none" stroke="#a01818" stroke-width="1.3"/><path d="M720 418.4 H737 M720 423.3 H737 M723 426.4 H733" fill="none" stroke="#a01818" stroke-width="1.4"/><path d="M586.4 485 V497 M586.4 508 V520" fill="none" stroke="#a01818" stroke-width="1.3"/><path d="M579 508 H594 L586.4 497 Z" fill="none" stroke="#a01818" stroke-width="1.3"/><path d="M579 497 H594" fill="none" stroke="#a01818" stroke-width="1.3"/><path d="M510 459.4 H524" fill="none" stroke="#a01818" stroke-width="1.3"/><path d="M524 449.1 V470.1" fill="none" stroke="#a01818" stroke-width="1.8"/><path d="M524 455.6 L533.6 448.6 M524 463.6 L533.6 470.6" fill="none" stroke="#a01818" stroke-width="1.3"/><path d="M533.6 470.6 l-6 -1 l3 -4.5 Z" fill="#a01818"/><path d="M533.6 441 V448.6 M533.6 470.6 V478" fill="none" stroke="#a01818" stroke-width="1.3"/><path d="M609 459.4 H628.7" fill="none" stroke="#a01818" stroke-width="1.3"/><path d="M628.7 449.1 V470.1" fill="none" stroke="#a01818" stroke-width="1.8"/><path d="M628.7 455.6 L638.3 448.6 M628.7 463.6 L638.3 470.6" fill="none" stroke="#a01818" stroke-width="1.3"/><path d="M629.7 455.1 l5.5 -0.5 l-2.5 -4.5 Z" fill="#a01818"/><path d="M638.3 441 V448.6 M638.3 470.6 V478" fill="none" stroke="#a01818" stroke-width="1.3"/><path d="M420 572 V578.6 M410 578.6 H430 M413.5 582 H426.5 M417 585.2 H423" fill="none" stroke="#111" stroke-width="1.3"/><path d="M405.5 312.3 V304.5 M398 304.5 H413" fill="none" stroke="#111" stroke-width="1.2"/><path d="M486.4 431.4 V424 M479 424 H494" fill="none" stroke="#111" stroke-width="1.2"/><text x="394.5" y="303" style="font-family:'Liberation Serif'" font-size="13" fill="#111">VCC</text><text x="475" y="423" style="font-family:'Liberation Serif'" font-size="13" fill="#111">+5V</text><circle cx="282.4" cy="312.3" r="2.6" fill="#c41212"/><circle cx="301.3" cy="312.3" r="2.6" fill="#c41212"/><circle cx="405.5" cy="312.3" r="2.6" fill="#c41212"/><circle cx="491.3" cy="312.3" r="2.6" fill="#c41212"/><circle cx="548.2" cy="312.3" r="2.6" fill="#c41212"/><circle cx="339.5" cy="431.3" r="2.6" fill="#c41212"/><circle cx="386.3" cy="431.3" r="2.6" fill="#c41212"/><circle cx="486.4" cy="431.4" r="2.6" fill="#c41212"/><circle cx="386.3" cy="459.4" r="2.6" fill="#c41212"/><circle cx="491.3" cy="459.4" r="2.6" fill="#c41212"/><circle cx="533.6" cy="411.8" r="2.6" fill="#c41212"/><circle cx="638.3" cy="412.3" r="2.6" fill="#c41212"/><circle cx="586.4" cy="459.4" r="2.6" fill="#c41212"/><circle cx="239.6" cy="450.2" r="2.6" fill="#c41212"/><circle cx="239.6" cy="550" r="2.6" fill="#c41212"/><circle cx="291.5" cy="550" r="2.6" fill="#c41212"/><circle cx="420" cy="550" r="2.6" fill="#c41212"/><circle cx="491.7" cy="550" r="2.6" fill="#c41212"/><circle cx="534" cy="550" r="2.6" fill="#c41212"/><circle cx="638.5" cy="550" r="2.6" fill="#c41212"/><circle cx="439" cy="459.4" r="2.2" fill="#c41212"/><circle cx="438.7" cy="531.1" r="2.2" fill="#c41212"/><text x="322" y="382.8" font-size="9.5" fill="#1c2fd0" >U1</text><text x="292" y="389.8" font-size="9.5" fill="#1c2fd0" >NE555DR</text><text x="356" y="418.8" font-size="9.5" fill="#1c2fd0" >R3</text><text x="355" y="427.8" font-size="9.5" fill="#1c2fd0" >22k</text><text x="406" y="414.8" font-size="9.5" fill="#1c2fd0" >R4</text><text x="405" y="423.8" font-size="9.5" fill="#1c2fd0" >470R</text><text x="405" y="443.8" font-size="9.5" fill="#1c2fd0" >R5</text><text x="405" y="452.8" font-size="9.5" fill="#1c2fd0" >470R</text><text x="458" y="443.8" font-size="9.5" fill="#1c2fd0" >R6</text><text x="457" y="452.8" font-size="9.5" fill="#1c2fd0" >470R</text><text x="501" y="336.8" font-size="9.5" fill="#1c2fd0" >R1</text><text x="501" y="345.3" font-size="9.5" fill="#1c2fd0" >1u</text><text x="514" y="381.8" font-size="9.5" fill="#1c2fd0" >LED12</text><text x="558" y="381.8" font-size="9.5" fill="#1c2fd0" >C32</text><text x="558" y="390.8" font-size="9.5" fill="#1c2fd0" >0.1u</text><text x="632" y="381.8" font-size="9.5" fill="#1c2fd0" >D1</text><text x="684" y="381.8" font-size="9.5" fill="#1c2fd0" >LED21</text><text x="538" y="461.8" font-size="9.5" fill="#1c2fd0" >Q1</text><text x="643" y="461.8" font-size="9.5" fill="#1c2fd0" >Q2</text><text x="735" y="415.8" font-size="9.5" fill="#1c2fd0" >12V</text><text x="739" y="425.3" font-size="9.5" fill="#1c2fd0" >B1</text><text x="251" y="489.8" font-size="9.5" fill="#1c2fd0" >C4</text><text x="251" y="498.8" font-size="9.5" fill="#1c2fd0" >2.2u</text><text x="269" y="490.8" font-size="9.5" fill="#1c2fd0" >SOIC-8_L5.0-W4.0-P1.27-LS8.0-BL</text><text x="340" y="516.8" font-size="9.5" fill="#1c2fd0" >R8</text><text x="340" y="524.8" font-size="9.5" fill="#1c2fd0" >1k</text><text x="449" y="505.8" font-size="9.5" fill="#1c2fd0" >C6</text><text x="449" y="514.8" font-size="9.5" fill="#1c2fd0" >0.1u</text><text x="498" y="503.8" font-size="9.5" fill="#1c2fd0" >R7</text><text x="498" y="512.3" font-size="9.5" fill="#1c2fd0" >470R</text><text x="595" y="507.8" font-size="9.5" fill="#1c2fd0" >D2</text><text x="596" y="516.3" font-size="9.5" fill="#1c2fd0" >1N4148</text><text x="246" y="429.6" font-size="10.5" fill="#1c2fd0" >7</text><text x="246" y="448.6" font-size="10.5" fill="#1c2fd0" >6</text><text x="246" y="467.1" font-size="10.5" fill="#1c2fd0" >5</text><text x="326" y="429.6" font-size="10.5" fill="#1c2fd0" >2</text><text x="326" y="457.6" font-size="10.5" fill="#1c2fd0" >3</text><text x="266" y="434.9" font-size="11" fill="#1c2fd0" >DIS</text><text x="292" y="434.9" font-size="11" fill="#1c2fd0" >TRIG</text><text x="266" y="453.9" font-size="11" fill="#1c2fd0" >THRS</text><text x="293" y="462.9" font-size="11" fill="#1c2fd0" >OUT</text><text x="266" y="471.9" font-size="11" fill="#1c2fd0" >CV</text><text transform="translate(276,389) rotate(-90)" font-size="10.5" fill="#1c2fd0">8</text><text transform="translate(295,389) rotate(-90)" font-size="10.5" fill="#1c2fd0">4</text><text transform="translate(287,425) rotate(-90)" font-size="11" fill="#1c2fd0">VCC</text><text transform="translate(306,423) rotate(-90)" font-size="11" fill="#1c2fd0">RST</text><text transform="translate(296,477) rotate(-90)" font-size="9.5" fill="#1c2fd0">GND</text><text x="274" y="447" font-size="14" font-weight="bold" fill="#1c2fd0">555</text><text transform="translate(727,440) rotate(-90)" font-size="10" fill="#1c2fd0">2</text><text transform="translate(729,413) rotate(-90)" font-size="10" fill="#1c2fd0">1</text><text x="214" y="374.2" font-size="10" fill="#1c2fd0" >2</text><path d="M213.5 440.9 H854" fill="none" stroke-dasharray="4.2 3.1" stroke="#ff1010" stroke-width="2"/><path d="M534 96 V783" fill="none" stroke-dasharray="4.2 3.1" stroke="#ff1010" stroke-width="2"/><circle cx="534" cy="441" r="3" fill="#c41212"/><path d="M534 93.5 V96" fill="none" stroke="#ff1010" stroke-width="2"/></g></svg><div style="position:absolute;left:393px;top:99px;width:197px;height:84.7px;background:#f7f7f7;box-shadow:0 0 5px 1px rgba(0,0,0,0.13);border-radius:2px"></div><div style="position:absolute;left:393px;top:99px;width:197px;height:22px;background:#ececec;border-bottom:1px solid #e2e2e2;box-sizing:border-box"></div><div style="position:absolute;left:399px;top:104px;font-size:12px;line-height:12px;color:#333;white-space:nowrap;line-height:13px">电气工具</div><div style="position:absolute;left:575px;top:109px;width:11px;height:1.2px;background:#999"></div><svg style="position:absolute;left:402px;top:132.7px;" width="18" height="18" viewBox="0 0 18 18"><circle cx="3" cy="3" r="2" stroke="#383838" stroke-width="1.3" fill="none"/><path d="M5 3 H7.5 V14 H13" stroke="#383838" stroke-width="1.3" fill="none"/><circle cx="15" cy="14" r="2" stroke="#383838" stroke-width="1.3" fill="none"/></svg><svg style="position:absolute;left:428.5px;top:132.7px;" width="18" height="18" viewBox="0 0 18 18"><path d="M2 2 H7 V15 M7 7 H14 M7 11 H14 M7 15 H14" stroke="#383838" stroke-width="1.3" fill="none"/></svg><svg style="position:absolute;left:455px;top:132.7px;" width="18" height="18" viewBox="0 0 18 18"><path d="M2 2 L15 15" stroke="#383838" stroke-width="1.3" fill="none"/></svg><svg style="position:absolute;left:481.5px;top:132.7px;" width="18" height="18" viewBox="0 0 18 18"><rect x="2" y="1" width="14" height="10" stroke="#383838" stroke-width="1.3" fill="none"/><path d="M9 11 V17" stroke="#383838" stroke-width="1.3" fill="none"/><text x="9" y="9" font-size="7" font-weight="bold" text-anchor="middle" fill="#383838">N</text></svg><svg style="position:absolute;left:508px;top:132.7px;" width="18" height="18" viewBox="0 0 18 18"><path d="M9 1 V7 M2 7 H16 M4 10.5 H14 M6 14 H12" stroke="#383838" stroke-width="1.3" fill="none"/></svg><svg style="position:absolute;left:534.5px;top:132.7px;" width="18" height="18" viewBox="0 0 18 18"><path d="M9 1 V8 M2 9 L9 16 L16 9" stroke="#383838" stroke-width="1.3" fill="none"/></svg><svg style="position:absolute;left:561px;top:132.7px;" width="18" height="18" viewBox="0 0 18 18"><path d="M1 3 H12 L17 9 L12 15 H1 Z" stroke="#383838" stroke-width="1.3" fill="none"/></svg><svg style="position:absolute;left:402px;top:159.4px;" width="18" height="18" viewBox="0 0 18 18"><text x="9" y="7" font-size="6.5" font-weight="bold" text-anchor="middle" fill="#383838">VCC</text><path d="M2 9 H16 M9 9 V17" stroke="#383838" stroke-width="1.3" fill="none"/></svg><svg style="position:absolute;left:428.5px;top:159.4px;" width="18" height="18" viewBox="0 0 18 18"><text x="9" y="7" font-size="6.5" font-weight="bold" text-anchor="middle" fill="#383838">+5V</text><path d="M2 9 H16 M9 9 V17" stroke="#383838" stroke-width="1.3" fill="none"/></svg><svg style="position:absolute;left:455px;top:159.4px;" width="18" height="18" viewBox="0 0 18 18"><path d="M2 2 L15 15 M15 2 L2 15" stroke="#383838" stroke-width="1.3" fill="none"/></svg><svg style="position:absolute;left:481.5px;top:159.4px;" width="18" height="18" viewBox="0 0 18 18"><path d="M1 17 L5 11 L10 6 L12 8 L7 13 Z M10 6 C12 3 14 2 17 2" stroke="#383838" stroke-width="1.3" fill="none"/></svg><svg style="position:absolute;left:508px;top:159.4px;" width="18" height="18" viewBox="0 0 18 18"><circle cx="3" cy="12" r="2" stroke="#383838" stroke-width="1.3" fill="none"/><path d="M5 12 H13 M14 9 V15 M17 9 V15" stroke="#383838" stroke-width="1.3" fill="none"/><text x="10" y="7" font-size="6" text-anchor="middle" fill="#383838">1</text></svg><svg style="position:absolute;left:534.5px;top:159.4px;" width="18" height="18" viewBox="0 0 18 18"><rect x="1" y="1" width="3" height="3" stroke="#383838" stroke-width="1.3" fill="none"/><rect x="14" y="1" width="3" height="3" stroke="#383838" stroke-width="1.3" fill="none"/><rect x="1" y="14" width="3" height="3" stroke="#383838" stroke-width="1.3" fill="none"/><rect x="14" y="14" width="3" height="3" stroke="#383838" stroke-width="1.3" fill="none"/><path d="M4 3 H8 V11 H14 M6 6 H12 V14" stroke="#383838" stroke-width="1.3" fill="none"/></svg><div style="position:absolute;left:596.4px;top:98.5px;width:65.4px;height:216.2px;background:#f7f7f7;box-shadow:0 0 5px 1px rgba(0,0,0,0.13);border-radius:2px"></div><div style="position:absolute;left:596.4px;top:98.5px;width:65.4px;height:22.8px;background:#ececec;border-bottom:1px solid #e2e2e2;box-sizing:border-box"></div><div style="position:absolute;left:602.4px;top:103.5px;font-size:12px;line-height:12px;color:#333;white-space:nowrap;line-height:13px">绘图...</div><div style="position:absolute;left:646.8px;top:108.5px;width:11px;height:1.2px;background:#999"></div><svg style="position:absolute;left:606px;top:132.8px;" width="18" height="18" viewBox="0 0 18 18"><rect x="1" y="3" width="16" height="12" stroke="#383838" stroke-width="1.3" fill="none"/><path d="M9 9 H17 M9 12 H17 M9 9 V15 M13 9 V15" stroke="#383838" stroke-width="1.3" fill="none"/></svg><svg style="position:absolute;left:632.3px;top:132.8px;" width="18" height="18" viewBox="0 0 18 18"><path d="M3 9 L13 1 M4 9 H13 L4 17" stroke="#383838" stroke-width="1.3" fill="none"/></svg><svg style="position:absolute;left:606px;top:159.6px;" width="18" height="18" viewBox="0 0 18 18"><path d="M1 15 C4 18 7 14 8 9 C9 4 13 0 17 3" stroke="#383838" stroke-width="1.3" fill="none"/></svg><svg style="position:absolute;left:632.3px;top:159.6px;" width="18" height="18" viewBox="0 0 18 18"><path d="M13 15 A7 7 0 1 1 15 6" stroke="#383838" stroke-width="1.3" fill="none"/><path d="M8 9 H12 M10 7 V11" stroke="#383838" stroke-width="1.3" fill="none"/></svg><svg style="position:absolute;left:606px;top:185.6px;" width="18" height="18" viewBox="0 0 18 18"><path d="M1 2 L17 9 L1 16 L6 9 Z" stroke="#383838" stroke-width="1.3" fill="none"/></svg><svg style="position:absolute;left:632.3px;top:185.6px;" width="18" height="18" viewBox="0 0 18 18"><path d="M2 2 H16 V5 M2 2 V5 M9 2 V16 M6 16 H12" stroke="#383838" stroke-width="1.3" fill="none" stroke-width="1.6"/></svg><svg style="position:absolute;left:606px;top:212.6px;" width="18" height="18" viewBox="0 0 18 18"><path d="M2 16 L3 11 L13 1 L17 5 L7 15 Z M5 10 L10 15 M8 7 L12 11" stroke="#383838" stroke-width="1.3" fill="none"/></svg><svg style="position:absolute;left:632.3px;top:212.6px;" width="18" height="18" viewBox="0 0 18 18"><rect x="2" y="2" width="14" height="14" stroke="#383838" stroke-width="1.3" fill="none"/></svg><svg style="position:absolute;left:606px;top:238.7px;" width="18" height="18" viewBox="0 0 18 18"><path d="M1 2 H12 L17 9 L12 16 H1 L6 9 Z" stroke="#383838" stroke-width="1.3" fill="none"/></svg><svg style="position:absolute;left:632.3px;top:238.7px;" width="18" height="18" viewBox="0 0 18 18"><circle cx="9" cy="9" r="7.5" stroke="#383838" stroke-width="1.3" fill="none"/></svg><svg style="position:absolute;left:606px;top:265.1px;" width="18" height="18" viewBox="0 0 18 18"><path d="M15 4 A7.5 7.5 0 1 0 15 14 L9 9 Z" stroke="#383838" stroke-width="1.3" fill="none"/></svg><svg style="position:absolute;left:632.3px;top:265.1px;" width="18" height="18" viewBox="0 0 18 18"><rect x="1.5" y="2.5" width="15" height="13" stroke="#383838" stroke-width="1.3" fill="none"/><path d="M2 12 L7 7 L11 11 L16 8" stroke="#383838" stroke-width="1.3" fill="none"/><circle cx="13" cy="5.5" r="0.9" fill="#383838"/></svg><svg style="position:absolute;left:606px;top:291.5px;" width="18" height="18" viewBox="0 0 18 18"><path d="M4 10 V4 M7 9 V2 M10 9 V2.5 M13 10 V5 M4 10 C3 14 6 17 10 17 C14 17 15 13 16 9" stroke="#383838" stroke-width="1.3" fill="none" stroke="#3a3060"/></svg><svg style="position:absolute;left:632.3px;top:291.5px;" width="18" height="18" viewBox="0 0 18 18"><path d="M3 17 V3 H16 M3 3 L1 6 M16 3 L13 1 M3 17 L1 14" stroke="#383838" stroke-width="1.3" fill="none"/></svg><div style="position:absolute;left:242px;top:740px;width:108.3px;height:24.4px;background:#f4f4f4;border:1px solid #cfcfcf;box-sizing:border-box"></div><div style="position:absolute;left:251px;top:746px;font-size:13px;line-height:13px;color:#444;white-space:nowrap;line-height:14px">Schematic</div><svg style="position:absolute;left:334px;top:747px;" width="12" height="8" viewBox="0 0 12 8"><path d="M1 7 L6 1.5 L11 7" fill="none" stroke="#999" stroke-width="1.3"/></svg><div style="position:absolute;left:353px;top:740px;width:22.5px;height:24.4px;background:#f4f4f4;border:1px solid #cfcfcf;box-sizing:border-box"></div><svg style="position:absolute;left:358px;top:746px;" width="12" height="12" viewBox="0 0 12 12"><path d="M6 0.5 V11.5 M0.5 6 H11.5" stroke="#222" stroke-width="1.8"/></svg><div style="position:absolute;left:1093px;top:96px;width:641px;height:687px;background-color:#000"></div><svg style="position:absolute;left:0;top:0" width="1747" height="785"><path d="M1107.38 96 V783 M1126.34 96 V783 M1145.30 96 V783 M1164.26 96 V783 M1183.22 96 V783 M1202.18 96 V783 M1221.14 96 V783 M1240.10 96 V783 M1259.06 96 V783 M1278.02 96 V783 M1296.98 96 V783 M1315.94 96 V783 M1334.90 96 V783 M1353.86 96 V783 M1372.82 96 V783 M1391.78 96 V783 M1410.74 96 V783 M1429.70 96 V783 M1448.66 96 V783 M1467.62 96 V783 M1486.58 96 V783 M1505.54 96 V783 M1524.50 96 V783 M1543.46 96 V783 M1562.42 96 V783 M1581.38 96 V783 M1600.34 96 V783 M1619.30 96 V783 M1638.26 96 V783 M1657.22 96 V783 M1676.18 96 V783 M1695.14 96 V783 M1714.10 96 V783 M1733.06 96 V783 M1093 110.34 H1734 M1093 129.36 H1734 M1093 148.38 H1734 M1093 167.40 H1734 M1093 186.42 H1734 M1093 205.44 H1734 M1093 224.46 H1734 M1093 243.48 H1734 M1093 262.50 H1734 M1093 281.52 H1734 M1093 300.54 H1734 M1093 319.56 H1734 M1093 338.58 H1734 M1093 357.60 H1734 M1093 376.62 H1734 M1093 395.64 H1734 M1093 414.66 H1734 M1093 433.68 H1734 M1093 452.70 H1734 M1093 471.72 H1734 M1093 490.74 H1734 M1093 509.76 H1734 M1093 528.78 H1734 M1093 547.80 H1734 M1093 566.82 H1734 M1093 585.84 H1734 M1093 604.86 H1734 M1093 623.88 H1734 M1093 642.90 H1734 M1093 661.92 H1734 M1093 680.94 H1734 M1093 699.96 H1734 M1093 718.98 H1734 M1093 738.00 H1734 M1093 757.02 H1734 M1093 776.04 H1734" stroke="#373737" stroke-width="2" fill="none"/></svg><div style="position:absolute;left:1734px;top:96px;width:2px;height:687px;background:#f4f4f4"></div><svg style="position:absolute;left:0;top:0" width="1747" height="785"><defs><clipPath id="pc"><rect x="1093" y="96" width="641" height="687"/></clipPath></defs><g clip-path="url(#pc)" font-family="Liberation Sans"><path d="M1280 254.5 L1258.5 276 V440.6 H1093" fill="none" stroke="#c6c000" stroke-width="1.6" stroke-linejoin="round" stroke-linecap="round"/><path d="M1258.5 440.6 H1284" fill="none" stroke="#c6c000" stroke-width="1.6" stroke-linejoin="round" stroke-linecap="round"/><path d="M1510.5 288 V424 L1577 491" fill="none" stroke="#c6c000" stroke-width="1.6" stroke-linejoin="round" stroke-linecap="round"/><path d="M1642 503 H1581 L1559 526" fill="none" stroke="#c6c000" stroke-width="1.6" stroke-linejoin="round" stroke-linecap="round"/><path d="M1490 522 L1468 526 L1455.5 540.5 V566.5 L1466.5 596" fill="none" stroke="#c6c000" stroke-width="1.6" stroke-linejoin="round" stroke-linecap="round"/><rect x="1148" y="355.7" width="444.5" height="209.3" fill="none" stroke="#b822b8" stroke-width="2"/><path d="M1159 356.7 L1179 376.7 M1179 356.7 L1159 376.7" stroke="#aaa" stroke-width="1"/><circle cx="1169" cy="366.7" r="8" fill="#333"/><path d="M1571 356.7 L1591 376.7 M1591 356.7 L1571 376.7" stroke="#aaa" stroke-width="1"/><circle cx="1581" cy="366.7" r="8" fill="#333"/><path d="M1159 542.6 L1179 562.6 M1179 542.6 L1159 562.6" stroke="#aaa" stroke-width="1"/><circle cx="1169" cy="552.6" r="8" fill="#333"/><path d="M1571 541.7 L1591 561.7 M1591 541.7 L1571 561.7" stroke="#aaa" stroke-width="1"/><circle cx="1581" cy="551.7" r="8" fill="#333"/><path d="M1175.3 452 V377 L1183 370 H1202 L1208 377 L1228 392 V405" fill="none" stroke="#aa1212" stroke-width="1.8" stroke-linejoin="round" stroke-linecap="round"/><path d="M1190 381.7 V452" fill="none" stroke="#aa1212" stroke-width="1.8" stroke-linejoin="round" stroke-linecap="round"/><path d="M1234 388 L1243 397 V405" fill="none" stroke="#aa1212" stroke-width="1.8" stroke-linejoin="round" stroke-linecap="round"/><path d="M1273 373 L1255 362 H1232 L1224 370 V378 L1262 403" fill="none" stroke="#aa1212" stroke-width="1.8" stroke-linejoin="round" stroke-linecap="round"/><path d="M1243 381.7 L1268 410" fill="none" stroke="#aa1212" stroke-width="1.8" stroke-linejoin="round" stroke-linecap="round"/><path d="M1291 379 V405" fill="none" stroke="#aa1212" stroke-width="1.8" stroke-linejoin="round" stroke-linecap="round"/><path d="M1268 419 L1257 431 H1240 L1222 447 L1206 463 L1190 479 V488" fill="none" stroke="#aa1212" stroke-width="1.8" stroke-linejoin="round" stroke-linecap="round"/><path d="M1291 421 V427 L1282 436 H1246 L1236.4 447" fill="none" stroke="#aa1212" stroke-width="1.8" stroke-linejoin="round" stroke-linecap="round"/><path d="M1260 440.6 H1275 L1283 448 L1287 453" fill="none" stroke="#aa1212" stroke-width="1.8" stroke-linejoin="round" stroke-linecap="round"/><path d="M1175 440 L1172 448" fill="none" stroke="#aa1212" stroke-width="1.8" stroke-linejoin="round" stroke-linecap="round"/><path d="M1190.3 440 V448" fill="none" stroke="#aa1212" stroke-width="1.8" stroke-linejoin="round" stroke-linecap="round"/><path d="M1204 466 L1191 479" fill="none" stroke="#aa1212" stroke-width="1.8" stroke-linejoin="round" stroke-linecap="round"/><path d="M1190 462 L1182 476 V488" fill="none" stroke="#aa1212" stroke-width="1.8" stroke-linejoin="round" stroke-linecap="round"/><path d="M1171.4 498 V520" fill="none" stroke="#aa1212" stroke-width="1.8" stroke-linejoin="round" stroke-linecap="round"/><path d="M1181.2 498 V531" fill="none" stroke="#aa1212" stroke-width="1.8" stroke-linejoin="round" stroke-linecap="round"/><path d="M1190.3 498 V512 L1216 540 H1229" fill="none" stroke="#aa1212" stroke-width="1.8" stroke-linejoin="round" stroke-linecap="round"/><path d="M1172 538 L1195 560.4 H1423 L1430 554 H1441" fill="none" stroke="#aa1212" stroke-width="1.8" stroke-linejoin="round" stroke-linecap="round"/><path d="M1236.4 498 L1224 505 V520" fill="none" stroke="#aa1212" stroke-width="1.8" stroke-linejoin="round" stroke-linecap="round"/><path d="M1245.7 498 L1235 510 V522" fill="none" stroke="#aa1212" stroke-width="1.8" stroke-linejoin="round" stroke-linecap="round"/><path d="M1255.7 498 V512 H1278 L1287 495" fill="none" stroke="#aa1212" stroke-width="1.8" stroke-linejoin="round" stroke-linecap="round"/><path d="M1240 540 H1287" fill="none" stroke="#aa1212" stroke-width="1.8" stroke-linejoin="round" stroke-linecap="round"/><path d="M1344 453 L1302 494 L1296 495" fill="none" stroke="#aa1212" stroke-width="1.8" stroke-linejoin="round" stroke-linecap="round"/><path d="M1287 495 L1278 510" fill="none" stroke="#aa1212" stroke-width="1.8" stroke-linejoin="round" stroke-linecap="round"/><path d="M1351 494.6 H1383" fill="none" stroke="#aa1212" stroke-width="1.8" stroke-linejoin="round" stroke-linecap="round"/><path d="M1394.7 489 V521" fill="none" stroke="#aa1212" stroke-width="1.8" stroke-linejoin="round" stroke-linecap="round"/><path d="M1351 540 H1416" fill="none" stroke="#aa1212" stroke-width="1.8" stroke-linejoin="round" stroke-linecap="round"/><path d="M1445 496 V540" fill="none" stroke="#aa1212" stroke-width="1.8" stroke-linejoin="round" stroke-linecap="round"/><path d="M1344 451.5 L1355 441 H1368 L1375.7 440.5" fill="none" stroke="#aa1212" stroke-width="1.8" stroke-linejoin="round" stroke-linecap="round"/><path d="M1299 373 L1301 371 H1325 L1327 368 H1368 L1375 377" fill="none" stroke="#aa1212" stroke-width="1.8" stroke-linejoin="round" stroke-linecap="round"/><path d="M1313.4 391.2 L1320 398 H1335" fill="none" stroke="#aa1212" stroke-width="1.8" stroke-linejoin="round" stroke-linecap="round"/><path d="M1348 398 H1375" fill="none" stroke="#aa1212" stroke-width="1.8" stroke-linejoin="round" stroke-linecap="round"/><path d="M1391 383 L1405 398 H1412" fill="none" stroke="#aa1212" stroke-width="1.8" stroke-linejoin="round" stroke-linecap="round"/><path d="M1423 384 H1446" fill="none" stroke="#aa1212" stroke-width="1.8" stroke-linejoin="round" stroke-linecap="round"/><path d="M1423 398 H1446" fill="none" stroke="#aa1212" stroke-width="1.8" stroke-linejoin="round" stroke-linecap="round"/><path d="M1390 403 L1411.9 425.5" fill="none" stroke="#aa1212" stroke-width="1.8" stroke-linejoin="round" stroke-linecap="round"/><path d="M1457 390 L1487 418" fill="none" stroke="#aa1212" stroke-width="1.8" stroke-linejoin="round" stroke-linecap="round"/><path d="M1450 404 L1463.6 416" fill="none" stroke="#aa1212" stroke-width="1.8" stroke-linejoin="round" stroke-linecap="round"/><path d="M1548 450 H1572" fill="none" stroke="#aa1212" stroke-width="1.8" stroke-linejoin="round" stroke-linecap="round"/><path d="M1489 427.5 H1465 L1451.9 440.5" fill="none" stroke="#aa1212" stroke-width="1.8" stroke-linejoin="round" stroke-linecap="round"/><path d="M1503 427.5 H1515 L1525 437 V500 L1560 530" fill="none" stroke="#aa1212" stroke-width="1.8" stroke-linejoin="round" stroke-linecap="round"/><path d="M1495 441 V478" fill="none" stroke="#aa1212" stroke-width="1.8" stroke-linejoin="round" stroke-linecap="round"/><path d="M1500 505 V520 L1488 545 L1470 560 H1451" fill="none" stroke="#aa1212" stroke-width="1.8" stroke-linejoin="round" stroke-linecap="round"/><path d="M1486 532 L1505 520" fill="none" stroke="#aa1212" stroke-width="1.8" stroke-linejoin="round" stroke-linecap="round"/><path d="M1290 391.2 H1313.4" fill="none" stroke="#2222c0" stroke-width="2" stroke-linejoin="round" stroke-linecap="round"/><path d="M1229 469 V495 L1238 505 H1263" fill="none" stroke="#2222c0" stroke-width="2" stroke-linejoin="round" stroke-linecap="round"/><path d="M1180 543 H1212 L1217 537" fill="none" stroke="#2222c0" stroke-width="2" stroke-linejoin="round" stroke-linecap="round"/><path d="M1411.9 425.5 L1470 485 H1492" fill="none" stroke="#2222c0" stroke-width="2" stroke-linejoin="round" stroke-linecap="round"/><path d="M1437 496 H1492" fill="none" stroke="#2222c0" stroke-width="2" stroke-linejoin="round" stroke-linecap="round"/><path d="M1416.6 539 L1423 532 H1478" fill="none" stroke="#2222c0" stroke-width="2" stroke-linejoin="round" stroke-linecap="round"/><path d="M1463.6 416 V428 L1485 450 H1548" fill="none" stroke="#2222c0" stroke-width="2" stroke-linejoin="round" stroke-linecap="round"/><path d="M1503 437.5 H1555 L1573 455 L1579 460.5" fill="none" stroke="#2222c0" stroke-width="2" stroke-linejoin="round" stroke-linecap="round"/><path d="M1412 425 L1440 455" fill="none" stroke="#2222c0" stroke-width="2" stroke-linejoin="round" stroke-linecap="round"/><rect x="1194.6" y="375.5" width="39.0" height="12.199999999999989" fill="none" stroke="#c6c000" stroke-width="1.6"/><circle cx="1186" cy="381.7" r="6.8" fill="#999" stroke="#8a5a8a" stroke-width="0.8"/><circle cx="1186" cy="381.7" r="3" fill="#333"/><circle cx="1243" cy="381.7" r="6.8" fill="#999" stroke="#8a5a8a" stroke-width="0.8"/><circle cx="1243" cy="381.7" r="3" fill="#333"/><text transform="translate(1216,395) rotate(180)" font-size="11" fill="#c6c000">R2</text><rect x="1224" y="405.8" width="8.0" height="12.699999999999989" fill="#a80404"/><rect x="1239.0" y="405.8" width="8.0" height="12.699999999999989" fill="#a80404"/><rect x="1221" y="403.6" width="29" height="16.899999999999977" fill="none" stroke="#c6c000" stroke-width="1.6"/><rect x="1270.5" y="405.8" width="8.75" height="12.699999999999989" fill="#a80404"/><rect x="1286.25" y="405.8" width="8.75" height="12.699999999999989" fill="#a80404"/><rect x="1267.5" y="403.6" width="30.5" height="16.899999999999977" fill="none" stroke="#c6c000" stroke-width="1.6"/><rect x="1273" y="374.7" width="8.0" height="12.300000000000011" fill="#a80404"/><rect x="1288.0" y="374.7" width="8.0" height="12.300000000000011" fill="#a80404"/><rect x="1270" y="372.5" width="29" height="16.5" fill="none" stroke="#c6c000" stroke-width="1.6"/><text transform="translate(1238,425) rotate(180)" font-size="11" fill="#c6c000">C1</text><text transform="translate(1284,425) rotate(180)" font-size="11" fill="#c6c000">C2</text><text x="1281" y="367" font-size="11" fill="#c6c000">R1</text><rect x="1168.9" y="447.1" width="5.0" height="10.699999999999989" fill="#a80404"/><rect x="1168.9" y="488.2" width="5.0" height="10.199999999999989" fill="#a80404"/><rect x="1178.7" y="447.1" width="5.0" height="10.699999999999989" fill="#a80404"/><rect x="1178.7" y="488.2" width="5.0" height="10.199999999999989" fill="#a80404"/><rect x="1187.8" y="447.1" width="5.0" height="10.699999999999989" fill="#a80404"/><rect x="1187.8" y="488.2" width="5.0" height="10.199999999999989" fill="#a80404"/><rect x="1197.7" y="447.1" width="5.0" height="10.699999999999989" fill="#a80404"/><rect x="1197.7" y="488.2" width="5.0" height="10.199999999999989" fill="#a80404"/><path d="M1167.5 459.6 H1205.8 V486.5 H1167.5 V477.05 A4 4 0 0 0 1167.5 469.05 Z" fill="none" stroke="#c6c000" stroke-width="1.6"/><rect x="1233.9" y="447.1" width="5.0" height="10.699999999999989" fill="#a80404"/><rect x="1233.9" y="488.2" width="5.0" height="10.199999999999989" fill="#a80404"/><rect x="1243.2" y="447.1" width="5.0" height="10.699999999999989" fill="#a80404"/><rect x="1243.2" y="488.2" width="5.0" height="10.199999999999989" fill="#a80404"/><rect x="1253.2" y="447.1" width="5.0" height="10.699999999999989" fill="#a80404"/><rect x="1253.2" y="488.2" width="5.0" height="10.199999999999989" fill="#a80404"/><rect x="1262.2" y="447.1" width="5.0" height="10.699999999999989" fill="#a80404"/><rect x="1262.2" y="488.2" width="5.0" height="10.199999999999989" fill="#a80404"/><path d="M1232 459.6 H1269.6 V486.5 H1232 V477.05 A4 4 0 0 0 1232 469.05 Z" fill="none" stroke="#c6c000" stroke-width="1.6"/><text x="1209" y="453" font-size="11" fill="#c6c000">U2</text><text x="1248" y="445" font-size="11" fill="#c6c000">U1</text><circle cx="1172.3" cy="531" r="11" fill="none" stroke="#c6c000" stroke-width="1.6"/><path d="M1172.3 520 A11 11 0 0 0 1172.3 542 Z" fill="#c6c000"/><circle cx="1166.8" cy="531" r="3.8" fill="#999" stroke="#8a5a8a" stroke-width="0.8"/><circle cx="1166.8" cy="531" r="1.8" fill="#333"/><circle cx="1177.8" cy="531" r="3.8" fill="#999" stroke="#8a5a8a" stroke-width="0.8"/><circle cx="1177.8" cy="531" r="1.8" fill="#333"/><path d="M1186.3 531 H1192.3 M1189.3 528 V534" fill="none" stroke="#c6c000" stroke-width="1.5" stroke-linejoin="round" stroke-linecap="round"/><text transform="translate(1184,510) rotate(90)" font-size="11" fill="#c6c000">C5</text><circle cx="1229.4" cy="531" r="11" fill="none" stroke="#c6c000" stroke-width="1.6"/><path d="M1229.4 520 A11 11 0 0 0 1229.4 542 Z" fill="#c6c000"/><circle cx="1223.9" cy="531" r="3.8" fill="#999" stroke="#8a5a8a" stroke-width="0.8"/><circle cx="1223.9" cy="531" r="1.8" fill="#333"/><circle cx="1234.9" cy="531" r="3.8" fill="#999" stroke="#8a5a8a" stroke-width="0.8"/><circle cx="1234.9" cy="531" r="1.8" fill="#333"/><path d="M1243.4 531 H1249.4 M1246.4 528 V534" fill="none" stroke="#c6c000" stroke-width="1.5" stroke-linejoin="round" stroke-linecap="round"/><text x="1244" y="546" font-size="11" fill="#c6c000">C4</text><rect x="1296.7" y="446.6" width="38.799999999999955" height="12.899999999999977" fill="none" stroke="#c6c000" stroke-width="1.6"/><circle cx="1287" cy="453" r="6.8" fill="#999" stroke="#8a5a8a" stroke-width="0.8"/><circle cx="1287" cy="453" r="3" fill="#333"/><circle cx="1344.2" cy="453" r="6.8" fill="#999" stroke="#8a5a8a" stroke-width="0.8"/><circle cx="1344.2" cy="453" r="3" fill="#333"/><rect x="1296.7" y="489" width="38.799999999999955" height="12" fill="none" stroke="#c6c000" stroke-width="1.6"/><circle cx="1287" cy="495" r="6.8" fill="#999" stroke="#8a5a8a" stroke-width="0.8"/><circle cx="1287" cy="495" r="3" fill="#333"/><circle cx="1344.2" cy="495" r="6.8" fill="#999" stroke="#8a5a8a" stroke-width="0.8"/><circle cx="1344.2" cy="495" r="3" fill="#333"/><rect x="1296.7" y="533.5" width="38.799999999999955" height="14.0" fill="none" stroke="#c6c000" stroke-width="1.6"/><circle cx="1287" cy="540" r="6.8" fill="#999" stroke="#8a5a8a" stroke-width="0.8"/><circle cx="1287" cy="540" r="3" fill="#333"/><circle cx="1344.2" cy="540" r="6.8" fill="#999" stroke="#8a5a8a" stroke-width="0.8"/><circle cx="1344.2" cy="540" r="3" fill="#333"/><rect x="1398.6" y="483" width="39.0" height="12" fill="none" stroke="#c6c000" stroke-width="1.6"/><circle cx="1389.6" cy="489.2" r="6.8" fill="#999" stroke="#8a5a8a" stroke-width="0.8"/><circle cx="1389.6" cy="489.2" r="3" fill="#333"/><circle cx="1446.4" cy="489.2" r="6.8" fill="#999" stroke="#8a5a8a" stroke-width="0.8"/><circle cx="1446.4" cy="489.2" r="3" fill="#333"/><rect x="1390" y="431.6" width="47.799999999999955" height="18.399999999999977" fill="none" stroke="#c6c000" stroke-width="1.6"/><circle cx="1375.7" cy="440.5" r="6.8" fill="#999" stroke="#8a5a8a" stroke-width="0.8"/><circle cx="1375.7" cy="440.5" r="3" fill="#333"/><circle cx="1451.9" cy="440.5" r="6.8" fill="#999" stroke="#8a5a8a" stroke-width="0.8"/><circle cx="1451.9" cy="440.5" r="3" fill="#333"/><text transform="translate(1317,461) rotate(180)" font-size="11" fill="#c6c000">R3</text><text transform="translate(1317,503) rotate(180)" font-size="11" fill="#c6c000">R5</text><text x="1315" y="530" font-size="11" fill="#c6c000">R8</text><text transform="translate(1419,497) rotate(180)" font-size="11" fill="#c6c000">R6</text><text transform="translate(1425,455) rotate(180)" font-size="11" fill="#c6c000">R4</text><rect x="1337.0" y="381.3" width="8.5" height="9.399999999999977" fill="#a80404"/><rect x="1337.0" y="393.09999999999997" width="8.5" height="9.900000000000034" fill="#a80404"/><rect x="1334.5" y="378.3" width="13.5" height="27.19999999999999" rx="5" fill="none" stroke="#c6c000" stroke-width="1.6"/><path d="M1337.5 392.9 A3.75 4 0 0 1 1345 392.9 Z" fill="#c6c000"/><rect x="1376.3" y="380.5" width="11.799999999999955" height="9.050000000000011" fill="#a80404"/><rect x="1376.3" y="391.95" width="11.799999999999955" height="9.550000000000011" fill="#a80404"/><rect x="1373.8" y="377.5" width="16.799999999999955" height="26.5" fill="none" stroke="#c6c000" stroke-width="1.6"/><rect x="1412.3" y="381" width="8.700000000000045" height="9.300000000000011" fill="#a80404"/><rect x="1412.3" y="392.7" width="8.700000000000045" height="9.800000000000011" fill="#a80404"/><rect x="1409.8" y="378" width="13.700000000000045" height="27" rx="5" fill="none" stroke="#c6c000" stroke-width="1.6"/><path d="M1412.8 392.5 A3.8500000000000227 4 0 0 1 1420.5 392.5 Z" fill="#c6c000"/><rect x="1445.9" y="380.4" width="9.099999999999909" height="9.250000000000057" fill="#a80404"/><rect x="1445.9" y="392.05" width="9.099999999999909" height="9.75" fill="#a80404"/><rect x="1443.4" y="377.4" width="14.099999999999909" height="26.900000000000034" rx="5" fill="none" stroke="#c6c000" stroke-width="1.6"/><path d="M1446.4 391.85 A4.0499999999999545 4 0 0 1 1454.5 391.85 Z" fill="#c6c000"/><text transform="translate(1350,388) rotate(90)" font-size="11" fill="#c6c000">LED1</text><text transform="translate(1372,378) rotate(90)" font-size="11" fill="#c6c000">C3</text><text transform="translate(1429,388) rotate(90)" font-size="11" fill="#c6c000">D1</text><text transform="translate(1458,389) rotate(90)" font-size="11" fill="#c6c000">LED2</text><rect x="1388.8" y="521" width="12.100000000000136" height="9.799999999999955" fill="#a80404"/><rect x="1388.8" y="533.2" width="12.100000000000136" height="10.299999999999955" fill="#a80404"/><rect x="1386.3" y="518" width="17.100000000000136" height="28" fill="none" stroke="#c6c000" stroke-width="1.6"/><rect x="1440.5" y="541" width="8.0" height="7.649999999999977" fill="#a80404"/><rect x="1440.5" y="551.0500000000001" width="8.0" height="8.149999999999977" fill="#a80404"/><rect x="1438" y="538" width="13" height="23.700000000000045" fill="none" stroke="#c6c000" stroke-width="1.6"/><text transform="translate(1383,534) rotate(-90)" font-size="11" fill="#c6c000">C6</text><text transform="translate(1433,557) rotate(-90)" font-size="11" fill="#c6c000">R7</text><path d="M1483.5 414.528 C1487.5 408 1514 406 1514 427.2 C1514 448.4 1487.5 446.4 1483.5 439.87199999999996 Z" fill="none" stroke="#c6c000" stroke-width="1.6"/><rect x="1487.5" y="413.90000000000003" width="17" height="7.4" rx="3.7" fill="#999"/><circle cx="1496" cy="417.6" r="2.2" fill="#333"/><rect x="1487.5" y="423.3" width="17" height="7.4" rx="3.7" fill="#999"/><circle cx="1496" cy="427" r="2.2" fill="#333"/><rect x="1487.5" y="432.7" width="17" height="7.4" rx="3.7" fill="#999"/><circle cx="1496" cy="436.4" r="2.2" fill="#333"/><text x="1498" y="407" font-size="11" fill="#c6c000">Q2</text><path d="M1490.5 482.63 C1494.5 476 1522 474 1522 495.5 C1522 517 1494.5 515 1490.5 508.37 Z" fill="none" stroke="#c6c000" stroke-width="1.6"/><rect x="1494.0" y="482.6" width="17" height="7.4" rx="3.7" fill="#f0f0f0"/><circle cx="1502.5" cy="486.3" r="2.2" fill="#333"/><rect x="1494.0" y="491.90000000000003" width="17" height="7.4" rx="3.7" fill="#999"/><circle cx="1502.5" cy="495.6" r="2.2" fill="#333"/><rect x="1494.0" y="501.20000000000005" width="17" height="7.4" rx="3.7" fill="#999"/><circle cx="1502.5" cy="504.90000000000003" r="2.2" fill="#333"/><text x="1505" y="478" font-size="11" fill="#c6c000">Q1</text><rect x="1506.4" y="524" width="34.59999999999991" height="16" fill="none" stroke="#c6c000" stroke-width="1.6"/><path d="M1515 532 H1533 M1521 527 V537 L1528 532 Z M1528 527 V537" fill="none" stroke="#c6c000" stroke-width="1.4" stroke-linejoin="round" stroke-linecap="round"/><rect x="1478" y="527.5" width="16" height="9" fill="#999"/><circle cx="1486" cy="532" r="2" fill="#333"/><rect x="1553.5" y="527.5" width="16" height="9" fill="#999"/><circle cx="1561.5" cy="532" r="2" fill="#333"/><text x="1522" y="518" font-size="11" fill="#c6c000">D2</text><rect x="1565.6" y="431" width="58.700000000000045" height="45.69999999999999" fill="none" stroke="#c6c000" stroke-width="1.6"/><path d="M1616 439 H1594 V469 H1616 M1600 446 H1616 M1600 453 H1616 M1600 461 H1616" fill="none" stroke="#c6c000" stroke-width="1.4" stroke-linejoin="round" stroke-linecap="round"/><circle cx="1579" cy="446.5" r="6.3" fill="#999" stroke="#8a5a8a" stroke-width="0.8"/><circle cx="1579" cy="446.5" r="2.6" fill="#333"/><circle cx="1579" cy="460.5" r="6.3" fill="#999" stroke="#8a5a8a" stroke-width="0.8"/><circle cx="1579" cy="460.5" r="2.6" fill="#333"/><text transform="translate(1628,437) rotate(90)" font-size="11" fill="#c6c000">B1</text><circle cx="1313.4" cy="391.2" r="2.6" fill="#999"/><circle cx="1313.4" cy="391.2" r="1.2" fill="#333"/><circle cx="1411.9" cy="425.5" r="2.6" fill="#999"/><circle cx="1411.9" cy="425.5" r="1.2" fill="#333"/><circle cx="1463.6" cy="416" r="2.6" fill="#999"/><circle cx="1463.6" cy="416" r="1.2" fill="#333"/><circle cx="1548" cy="450" r="2.6" fill="#999"/><circle cx="1548" cy="450" r="1.2" fill="#333"/><circle cx="1416.6" cy="539.3" r="2.6" fill="#999"/><circle cx="1416.6" cy="539.3" r="1.2" fill="#333"/><circle cx="1229" cy="469" r="2.6" fill="#999"/><circle cx="1229" cy="469" r="1.2" fill="#333"/><circle cx="1263" cy="505" r="2.6" fill="#999"/><circle cx="1263" cy="505" r="1.2" fill="#333"/></g></svg><div style="position:absolute;left:1302px;top:99px;width:236px;height:124.6px;background:#f7f7f7;box-shadow:0 0 5px 1px rgba(0,0,0,0.18);border-radius:2px"></div><div style="position:absolute;left:1302px;top:99px;width:236px;height:23px;background:#ececec;border-bottom:1px solid #dedede;box-sizing:border-box"></div><div style="position:absolute;left:1308px;top:104.5px;font-size:12px;line-height:12px;color:#333;white-space:nowrap;line-height:13px">层与元素</div><svg style="position:absolute;left:1485px;top:104px;" width="14" height="14" viewBox="0 0 14 14"><path d="M8 1 L13 6 L11 7 L8 10 L8.5 12 L2 5.5 L4 6 L7 3 Z M5 9 L1 13" fill="#444" stroke="#444" stroke-width="1.2"/></svg><svg style="position:absolute;left:1504px;top:104px;" width="14" height="14" viewBox="0 0 14 14"><circle cx="7" cy="7" r="5" fill="none" stroke="#555" stroke-width="2.4" stroke-dasharray="2.2 1.7"/><circle cx="7" cy="7" r="2.3" fill="none" stroke="#555" stroke-width="1.3"/></svg><div style="position:absolute;left:1522px;top:109px;width:10px;height:1.2px;background:#888"></div><div style="position:absolute;left:1304px;top:122px;width:216px;height:25px;background:#fff"></div><div style="position:absolute;left:1304px;top:123px;width:52px;height:24px;background:#fff"></div><div style="position:absolute;left:1356px;top:123px;width:57px;height:24px;background:#e4e4e4"></div><div style="position:absolute;left:1413px;top:123px;width:63px;height:24px;background:#e4e4e4"></div><div style="position:absolute;left:1477px;top:123px;width:43px;height:24px;background:#e4e4e4"></div><div style="position:absolute;left:1421px;top:128px;font-size:12.5px;line-height:12.5px;color:#333;white-space:nowrap;line-height:14px">非铜箔层</div><div style="position:absolute;left:1486px;top:128px;font-size:12.5px;line-height:12.5px;color:#333;white-space:nowrap;line-height:14px">元素</div><div style="position:absolute;left:1304px;top:148px;width:232px;height:2px;background:#fff"></div><div style="position:absolute;left:1304px;top:150px;width:231px;height:66px;background:#dcdcdc"></div><svg style="position:absolute;left:1522px;top:208px;" width="12" height="12" viewBox="0 0 12 12"><path d="M11 2 L2 11 M11 6 L6 11 M11 9.5 L9.5 11" stroke="#666" stroke-width="1"/></svg><div style="position:absolute;left:1137.2px;top:129.8px;width:276.1px;height:86.5px;background:#f7f7f7;box-shadow:0 0 5px 1px rgba(0,0,0,0.18);border-radius:2px"></div><div style="position:absolute;left:1137.2px;top:129.8px;width:276.1px;height:23.8px;background:#ececec;border-bottom:1px solid #dedede;box-sizing:border-box"></div><div style="position:absolute;left:1143.2px;top:135.3px;font-size:12px;line-height:12px;color:#333;white-space:nowrap;line-height:13px">PCB工具</div><div style="position:absolute;left:1396px;top:140px;width:11px;height:1.2px;background:#999"></div><svg style="position:absolute;left:1146.8px;top:164.2px;" width="18" height="18" viewBox="0 0 18 18"><circle cx="3" cy="3" r="2" stroke="#2a2a2a" stroke-width="1.3" fill="none"/><path d="M5 3 H7.5 V14 H13" stroke="#2a2a2a" stroke-width="1.3" fill="none"/><circle cx="15" cy="14" r="2" stroke="#2a2a2a" stroke-width="1.3" fill="none"/></svg><svg style="position:absolute;left:1173.4px;top:164.2px;" width="18" height="18" viewBox="0 0 18 18"><circle cx="9" cy="9" r="5.5" fill="none" stroke="#2a2a2a" stroke-width="3"/></svg><svg style="position:absolute;left:1200.3px;top:164.2px;" width="18" height="18" viewBox="0 0 18 18"><circle cx="6" cy="6" r="4" stroke="#2a2a2a" stroke-width="1.3" fill="none" stroke-width="1.8"/><path d="M6 10 V17 M10 6 H17" stroke="#2a2a2a" stroke-width="1.3" fill="none" stroke-width="1.8"/></svg><svg style="position:absolute;left:1227px;top:164.2px;" width="18" height="18" viewBox="0 0 18 18"><path d="M2 2 H16 V5 M2 2 V5 M9 2 V16 M6 16 H12" stroke="#2a2a2a" stroke-width="1.3" fill="none" stroke-width="1.6"/></svg><svg style="position:absolute;left:1253.4px;top:164.2px;" width="18" height="18" viewBox="0 0 18 18"><path d="M9 16 A7 7 0 1 1 16 9" stroke="#2a2a2a" stroke-width="1.3" fill="none"/><path d="M9 9 H16 M9 9 V16" stroke="#2a2a2a" stroke-width="1.3" fill="none" stroke-dasharray="1.5 1.5"/></svg><svg style="position:absolute;left:1279.9px;top:164.2px;" width="18" height="18" viewBox="0 0 18 18"><path d="M9 16 A7 7 0 1 1 16 9" stroke="#2a2a2a" stroke-width="1.3" fill="none"/><path d="M12 12 L9 16" stroke="#2a2a2a" stroke-width="1.3" fill="none"/></svg><svg style="position:absolute;left:1306.5px;top:164.2px;" width="18" height="18" viewBox="0 0 18 18"><circle cx="9" cy="9" r="7.5" stroke="#2a2a2a" stroke-width="1.3" fill="none"/></svg><svg style="position:absolute;left:1333.4px;top:164.2px;" width="18" height="18" viewBox="0 0 18 18"><path d="M4 10 V4 M7 9 V2 M10 9 V2.5 M13 10 V5 M4 10 C3 14 6 17 10 17 C14 17 15 13 16 9" stroke="#2a2a2a" stroke-width="1.3" fill="none"/></svg><svg style="position:absolute;left:1359.6px;top:164.2px;" width="18" height="18" viewBox="0 0 18 18"><path d="M2 2 L16 16 M16 2 L2 16" stroke="#2a2a2a" stroke-width="1.3" fill="none"/><rect x="4" y="4" width="10" height="10" rx="3" stroke="#2a2a2a" stroke-width="1.3" fill="none"/></svg><svg style="position:absolute;left:1386.6px;top:164.2px;" width="18" height="18" viewBox="0 0 18 18"><rect x="1.5" y="2.5" width="15" height="13" stroke="#2a2a2a" stroke-width="1.3" fill="none"/><path d="M2 12 L7 7 L11 11 L16 8" stroke="#2a2a2a" stroke-width="1.3" fill="none"/><circle cx="13" cy="5.5" r="0.9" fill="#2a2a2a"/></svg><svg style="position:absolute;left:1146.8px;top:191px;" width="18" height="18" viewBox="0 0 18 18"><path d="M3 17 V3 H16 M3 3 L1 6 M16 3 L13 1 M3 17 L1 14" stroke="#2a2a2a" stroke-width="1.3" fill="none"/></svg><svg style="position:absolute;left:1173.4px;top:191px;" width="18" height="18" viewBox="0 0 18 18"><path d="M1 16 H16 M1 16 L13 5" stroke="#2a2a2a" stroke-width="1.3" fill="none"/></svg><svg style="position:absolute;left:1200.3px;top:191px;" width="18" height="18" viewBox="0 0 18 18"><circle cx="3" cy="3" r="2" stroke="#2a2a2a" stroke-width="1.3" fill="none"/><path d="M4.5 4.5 L13.5 13.5" stroke="#2a2a2a" stroke-width="1.3" fill="none"/><circle cx="15" cy="15" r="2" stroke="#2a2a2a" stroke-width="1.3" fill="none"/></svg><svg style="position:absolute;left:1227px;top:191px;" width="18" height="18" viewBox="0 0 18 18"><rect x="2" y="4" width="14" height="11" stroke="#2a2a2a" stroke-width="1.3" fill="none" stroke-dasharray="2 1.5"/></svg><svg style="position:absolute;left:1253.4px;top:191px;" width="18" height="18" viewBox="0 0 18 18"><path d="M1 16 H17 V3 H9 V10 H1 Z" stroke="#2a2a2a" stroke-width="1.3" fill="none"/></svg><svg style="position:absolute;left:1279.9px;top:191px;" width="18" height="18" viewBox="0 0 18 18"><path d="M2 16 L16 2 M5 8 L10 13 M12 2 H16 V6" stroke="#2a2a2a" stroke-width="1.3" fill="none"/></svg><svg style="position:absolute;left:1306.5px;top:191px;" width="18" height="18" viewBox="0 0 18 18"><rect x="2" y="2" width="14" height="14" stroke="#2a2a2a" stroke-width="1.3" fill="none"/></svg><svg style="position:absolute;left:1333.4px;top:191px;" width="18" height="18" viewBox="0 0 18 18"><rect x="1" y="1" width="3" height="3" stroke="#2a2a2a" stroke-width="1.3" fill="none"/><rect x="14" y="1" width="3" height="3" stroke="#2a2a2a" stroke-width="1.3" fill="none"/><rect x="1" y="14" width="3" height="3" stroke="#2a2a2a" stroke-width="1.3" fill="none"/><rect x="14" y="14" width="3" height="3" stroke="#2a2a2a" stroke-width="1.3" fill="none"/><path d="M4 3 H8 V11 H14 M6 6 H12 V14" stroke="#2a2a2a" stroke-width="1.3" fill="none"/></svg><svg style="position:absolute;left:1359.6px;top:191px;" width="18" height="18" viewBox="0 0 18 18"><rect x="1" y="3" width="16" height="12" stroke="#2a2a2a" stroke-width="1.3" fill="none"/><path d="M9 9 H17 M9 12 H17 M9 9 V15 M13 9 V15" stroke="#2a2a2a" stroke-width="1.3" fill="none"/></svg><div style="position:absolute;left:187px;top:393px;width:6px;height:46px;background:#f2f2f2;border:1px solid #6f7f8f;box-sizing:border-box"></div><svg style="position:absolute;left:188px;top:412px;" width="4" height="8" viewBox="0 0 4 8"><path d="M4 0 L0 4 L4 8 Z" fill="#555"/></svg><div style="position:absolute;left:856px;top:393px;width:6px;height:46px;background:#f2f2f2;border:1px solid #6f7f8f;box-sizing:border-box"></div><svg style="position:absolute;left:857px;top:412px;" width="4" height="8" viewBox="0 0 4 8"><path d="M4 0 L0 4 L4 8 Z" fill="#555"/></svg><div style="position:absolute;left:1067px;top:393px;width:6px;height:46px;background:#f2f2f2;border:1px solid #6f7f8f;box-sizing:border-box"></div><svg style="position:absolute;left:1068px;top:412px;" width="4" height="8" viewBox="0 0 4 8"><path d="M4 0 L0 4 L4 8 Z" fill="#555"/></svg><div style="position:absolute;left:1736px;top:393px;width:6px;height:46px;background:#f2f2f2;border:1px solid #6f7f8f;box-sizing:border-box"></div><svg style="position:absolute;left:1737px;top:412px;" width="4" height="8" viewBox="0 0 4 8"><path d="M4 0 L0 4 L4 8 Z" fill="#555"/></svg><svg style="position:absolute;left:1026px;top:535px;" width="16" height="22" viewBox="0 0 16 22"><path d="M1.5 1.5 V17 L5.2 13.5 L8 20 L10.8 18.8 L8.2 12.6 H13.2 Z" fill="#fff" stroke="#111" stroke-width="1.1" stroke-linejoin="round"/></svg>
</body></html>
